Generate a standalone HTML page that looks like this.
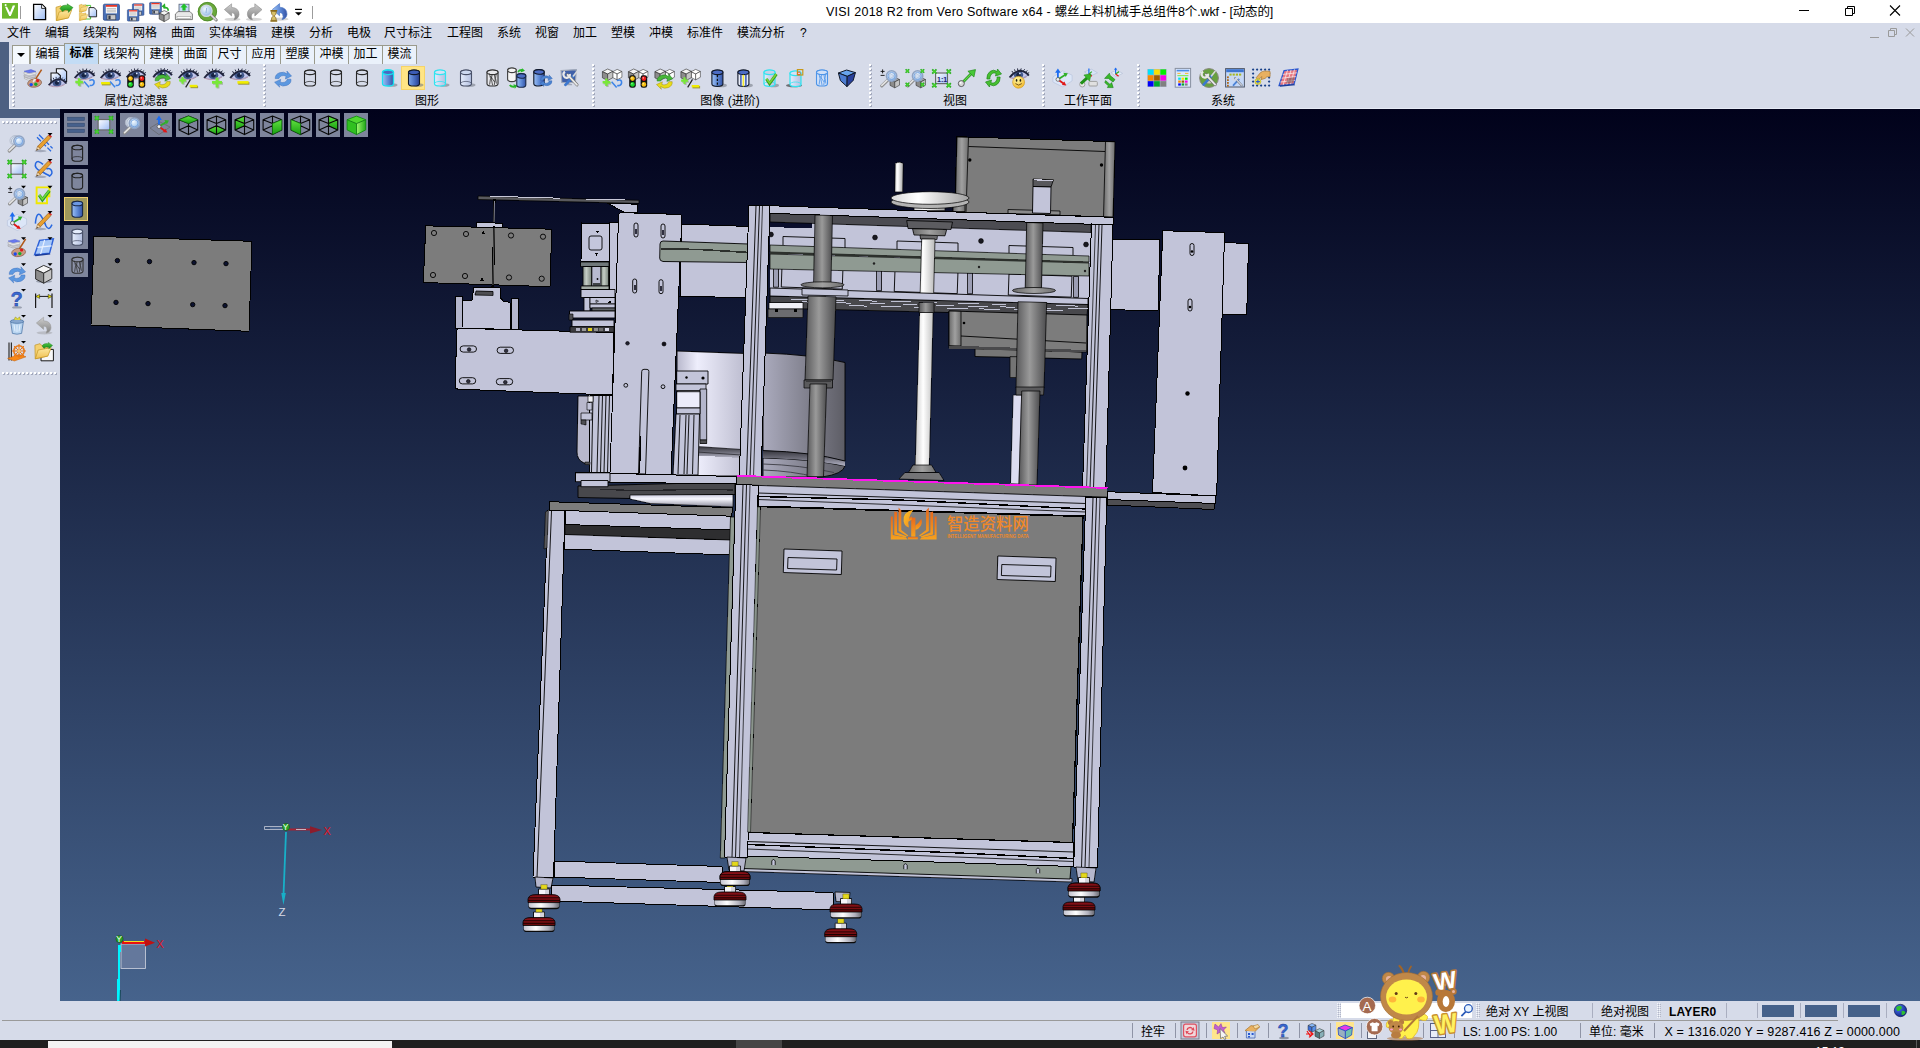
<!DOCTYPE html>
<html lang="zh"><head><meta charset="utf-8"><title>VISI 2018 R2</title>
<style>
html,body{margin:0;padding:0}
body{width:1920px;height:1048px;overflow:hidden;position:relative;background:#d6dbe9;font-family:"Liberation Sans","Noto Sans CJK SC",sans-serif}
.t{position:absolute;line-height:16px;white-space:nowrap}
svg{position:absolute;left:0;top:0;overflow:hidden}
</style></head><body>
<div style="position:absolute;left:0;top:0;width:1920px;height:23px;background:#fff"></div>
<div class="t " style="left:826px;top:3.5px;font-size:12.5px;color:#000;white-space:nowrap;"><span style="letter-spacing:0.24px">VISI 2018 R2 from Vero Software x64 - </span><span style="letter-spacing:-0.16px">螺丝上料机械手总组件8个.wkf - [动态的]</span></div>
<div style="position:absolute;left:0;top:23px;width:1920px;height:21px;background:#d6dbe9"></div>
<div class="t " style="left:7px;top:24.5px;font-size:12px;color:#000;">文件</div>
<div class="t " style="left:45px;top:24.5px;font-size:12px;color:#000;">编辑</div>
<div class="t " style="left:83px;top:24.5px;font-size:12px;color:#000;">线架构</div>
<div class="t " style="left:133px;top:24.5px;font-size:12px;color:#000;">网格</div>
<div class="t " style="left:171px;top:24.5px;font-size:12px;color:#000;">曲面</div>
<div class="t " style="left:209px;top:24.5px;font-size:12px;color:#000;">实体编辑</div>
<div class="t " style="left:271px;top:24.5px;font-size:12px;color:#000;">建模</div>
<div class="t " style="left:309px;top:24.5px;font-size:12px;color:#000;">分析</div>
<div class="t " style="left:347px;top:24.5px;font-size:12px;color:#000;">电极</div>
<div class="t " style="left:384px;top:24.5px;font-size:12px;color:#000;">尺寸标注</div>
<div class="t " style="left:447px;top:24.5px;font-size:12px;color:#000;">工程图</div>
<div class="t " style="left:497px;top:24.5px;font-size:12px;color:#000;">系统</div>
<div class="t " style="left:535px;top:24.5px;font-size:12px;color:#000;">视窗</div>
<div class="t " style="left:573px;top:24.5px;font-size:12px;color:#000;">加工</div>
<div class="t " style="left:611px;top:24.5px;font-size:12px;color:#000;">塑模</div>
<div class="t " style="left:649px;top:24.5px;font-size:12px;color:#000;">冲模</div>
<div class="t " style="left:687px;top:24.5px;font-size:12px;color:#000;">标准件</div>
<div class="t " style="left:737px;top:24.5px;font-size:12px;color:#000;">模流分析</div>
<div class="t " style="left:800px;top:24.5px;font-size:12px;color:#000;">?</div>
<div style="position:absolute;left:0;top:42px;width:9px;height:76px;background:#4d6082"></div>
<div style="position:absolute;left:0;top:109px;width:60px;height:9px;background:#4d6082"></div>
<div style="position:absolute;left:9px;top:42px;width:1911px;height:67px;background:#d6dbe9"></div>
<div style="position:absolute;left:9px;top:64px;width:1911px;height:45px;border-left:1px solid #e6eaf5;border-bottom:1px solid #e6eaf5;box-sizing:border-box"></div>
<div style="position:absolute;left:12px;top:45px;width:18px;height:19px;background:#f4f8fd;border:1px solid #9a9a8c;border-bottom:none;box-sizing:border-box"></div>
<div style="position:absolute;left:17px;top:53px;width:0;height:0;border-left:4px solid transparent;border-right:4px solid transparent;border-top:4px solid #000"></div>
<div style="position:absolute;left:30px;top:45px;width:35px;height:19px;background:#eaf1fb;border:1px solid #9a9a8c;border-bottom:none;box-sizing:border-box"></div>
<div class="t " style="left:30px;top:46px;font-size:12px;color:#000;width:35px;text-align:center;">编辑</div>
<div style="position:absolute;left:64px;top:43px;width:35px;height:21px;background:#c3dcf5;border:1px solid #9a9a8c;border-bottom:none;box-sizing:border-box"></div>
<div class="t " style="left:64px;top:45px;font-size:12px;color:#000;width:35px;text-align:center;font-weight:bold;">标准</div>
<div style="position:absolute;left:98px;top:45px;width:47px;height:19px;background:#eaf1fb;border:1px solid #9a9a8c;border-bottom:none;box-sizing:border-box"></div>
<div class="t " style="left:98px;top:46px;font-size:12px;color:#000;width:47px;text-align:center;">线架构</div>
<div style="position:absolute;left:144px;top:45px;width:35px;height:19px;background:#eaf1fb;border:1px solid #9a9a8c;border-bottom:none;box-sizing:border-box"></div>
<div class="t " style="left:144px;top:46px;font-size:12px;color:#000;width:35px;text-align:center;">建模</div>
<div style="position:absolute;left:178px;top:45px;width:35px;height:19px;background:#eaf1fb;border:1px solid #9a9a8c;border-bottom:none;box-sizing:border-box"></div>
<div class="t " style="left:178px;top:46px;font-size:12px;color:#000;width:35px;text-align:center;">曲面</div>
<div style="position:absolute;left:212px;top:45px;width:35px;height:19px;background:#eaf1fb;border:1px solid #9a9a8c;border-bottom:none;box-sizing:border-box"></div>
<div class="t " style="left:212px;top:46px;font-size:12px;color:#000;width:35px;text-align:center;">尺寸</div>
<div style="position:absolute;left:246px;top:45px;width:35px;height:19px;background:#eaf1fb;border:1px solid #9a9a8c;border-bottom:none;box-sizing:border-box"></div>
<div class="t " style="left:246px;top:46px;font-size:12px;color:#000;width:35px;text-align:center;">应用</div>
<div style="position:absolute;left:280px;top:45px;width:35px;height:19px;background:#eaf1fb;border:1px solid #9a9a8c;border-bottom:none;box-sizing:border-box"></div>
<div class="t " style="left:280px;top:46px;font-size:12px;color:#000;width:35px;text-align:center;">塑膜</div>
<div style="position:absolute;left:314px;top:45px;width:35px;height:19px;background:#eaf1fb;border:1px solid #9a9a8c;border-bottom:none;box-sizing:border-box"></div>
<div class="t " style="left:314px;top:46px;font-size:12px;color:#000;width:35px;text-align:center;">冲模</div>
<div style="position:absolute;left:348px;top:45px;width:35px;height:19px;background:#eaf1fb;border:1px solid #9a9a8c;border-bottom:none;box-sizing:border-box"></div>
<div class="t " style="left:348px;top:46px;font-size:12px;color:#000;width:35px;text-align:center;">加工</div>
<div style="position:absolute;left:382px;top:45px;width:35px;height:19px;background:#eaf1fb;border:1px solid #9a9a8c;border-bottom:none;box-sizing:border-box"></div>
<div class="t " style="left:382px;top:46px;font-size:12px;color:#000;width:35px;text-align:center;">模流</div>
<div style="position:absolute;left:12px;top:64px;width:3px;height:44px;background:repeating-linear-gradient(to bottom,#fff 0 2px,transparent 2px 4px) 0 0/2px 100% no-repeat,repeating-linear-gradient(to bottom,transparent 0 1px,#a3a9bc 1px 3px,transparent 3px 4px) 1px 0/2px 100% no-repeat"></div>
<div style="position:absolute;left:263px;top:64px;width:3px;height:44px;background:repeating-linear-gradient(to bottom,#fff 0 2px,transparent 2px 4px) 0 0/2px 100% no-repeat,repeating-linear-gradient(to bottom,transparent 0 1px,#a3a9bc 1px 3px,transparent 3px 4px) 1px 0/2px 100% no-repeat"></div>
<div style="position:absolute;left:592px;top:64px;width:3px;height:44px;background:repeating-linear-gradient(to bottom,#fff 0 2px,transparent 2px 4px) 0 0/2px 100% no-repeat,repeating-linear-gradient(to bottom,transparent 0 1px,#a3a9bc 1px 3px,transparent 3px 4px) 1px 0/2px 100% no-repeat"></div>
<div style="position:absolute;left:869px;top:64px;width:3px;height:44px;background:repeating-linear-gradient(to bottom,#fff 0 2px,transparent 2px 4px) 0 0/2px 100% no-repeat,repeating-linear-gradient(to bottom,transparent 0 1px,#a3a9bc 1px 3px,transparent 3px 4px) 1px 0/2px 100% no-repeat"></div>
<div style="position:absolute;left:1042px;top:64px;width:3px;height:44px;background:repeating-linear-gradient(to bottom,#fff 0 2px,transparent 2px 4px) 0 0/2px 100% no-repeat,repeating-linear-gradient(to bottom,transparent 0 1px,#a3a9bc 1px 3px,transparent 3px 4px) 1px 0/2px 100% no-repeat"></div>
<div style="position:absolute;left:1137px;top:64px;width:3px;height:44px;background:repeating-linear-gradient(to bottom,#fff 0 2px,transparent 2px 4px) 0 0/2px 100% no-repeat,repeating-linear-gradient(to bottom,transparent 0 1px,#a3a9bc 1px 3px,transparent 3px 4px) 1px 0/2px 100% no-repeat"></div>
<div class="t " style="left:76px;top:93px;font-size:12px;color:#000;width:120px;text-align:center;">属性/过滤器</div>
<div class="t " style="left:367px;top:93px;font-size:12px;color:#000;width:120px;text-align:center;">图形</div>
<div class="t " style="left:670px;top:93px;font-size:12px;color:#000;width:120px;text-align:center;">图像 (进阶)</div>
<div class="t " style="left:895px;top:93px;font-size:12px;color:#000;width:120px;text-align:center;">视图</div>
<div class="t " style="left:1028px;top:93px;font-size:12px;color:#000;width:120px;text-align:center;">工作平面</div>
<div class="t " style="left:1163px;top:93px;font-size:12px;color:#000;width:120px;text-align:center;">系统</div>
<div style="position:absolute;left:401px;top:66px;width:24px;height:24px;background:#ffe585;border:1px solid #f6d468;box-sizing:border-box"></div>
<div style="position:absolute;left:0;top:118px;width:60px;height:883px;background:#d6dbe9"></div>
<div style="position:absolute;left:2px;top:121px;width:56px;height:3px;background:repeating-linear-gradient(to right,#fff 0 2px,transparent 2px 4px) 0 0/100% 2px no-repeat,repeating-linear-gradient(to right,transparent 0 1px,#a3a9bc 1px 3px,transparent 3px 4px) 0 1px/100% 2px no-repeat"></div>
<div style="position:absolute;left:2px;top:372px;width:56px;height:3px;background:repeating-linear-gradient(to right,#fff 0 2px,transparent 2px 4px) 0 0/100% 2px no-repeat,repeating-linear-gradient(to right,transparent 0 1px,#a3a9bc 1px 3px,transparent 3px 4px) 0 1px/100% 2px no-repeat"></div>
<div style="position:absolute;left:0;top:1001px;width:1920px;height:39px;background:#d6dbe9"></div>
<div style="position:absolute;left:2px;top:1020px;width:1836px;height:1px;background:#9a9a9a"></div>
<div style="position:absolute;left:1341px;top:1003px;width:131px;height:15px;background:#fff"></div>
<div style="position:absolute;left:1337px;top:1003px;width:4px;height:15px;background:repeating-linear-gradient(to bottom,#f4f6fa 0 1px,transparent 1px 2px) 0 0/1px 100% no-repeat,repeating-linear-gradient(to bottom,transparent 0 1px,#b4b8c8 1px 2px) 1px 0/1px 100% no-repeat,repeating-linear-gradient(to bottom,#f4f6fa 0 1px,transparent 1px 2px) 2px 0/1px 100% no-repeat,repeating-linear-gradient(to bottom,transparent 0 1px,#b4b8c8 1px 2px) 3px 0/1px 100% no-repeat"></div>
<div style="position:absolute;left:1476px;top:1003px;width:4px;height:15px;background:repeating-linear-gradient(to bottom,#f4f6fa 0 1px,transparent 1px 2px) 0 0/1px 100% no-repeat,repeating-linear-gradient(to bottom,transparent 0 1px,#b4b8c8 1px 2px) 1px 0/1px 100% no-repeat,repeating-linear-gradient(to bottom,#f4f6fa 0 1px,transparent 1px 2px) 2px 0/1px 100% no-repeat,repeating-linear-gradient(to bottom,transparent 0 1px,#b4b8c8 1px 2px) 3px 0/1px 100% no-repeat"></div>
<div style="position:absolute;left:1657px;top:1003px;width:4px;height:15px;background:repeating-linear-gradient(to bottom,#f4f6fa 0 1px,transparent 1px 2px) 0 0/1px 100% no-repeat,repeating-linear-gradient(to bottom,transparent 0 1px,#b4b8c8 1px 2px) 1px 0/1px 100% no-repeat,repeating-linear-gradient(to bottom,#f4f6fa 0 1px,transparent 1px 2px) 2px 0/1px 100% no-repeat,repeating-linear-gradient(to bottom,transparent 0 1px,#b4b8c8 1px 2px) 3px 0/1px 100% no-repeat"></div>
<div class="t " style="left:1486px;top:1004px;font-size:12px;color:#000;white-space:nowrap;">绝对 XY 上视图</div>
<div class="t " style="left:1601px;top:1004px;font-size:12px;color:#000;">绝对视图</div>
<div class="t " style="left:1669px;top:1004px;font-size:12px;color:#000;font-weight:bold;letter-spacing:0.2px;">LAYER0</div>
<div style="position:absolute;left:1592px;top:1003px;width:1px;height:15px;background:#a9aec0"></div>
<div style="position:absolute;left:1726px;top:1003px;width:1px;height:15px;background:#a9aec0"></div>
<div style="position:absolute;left:1757px;top:1003px;width:1px;height:15px;background:#a9aec0"></div>
<div style="position:absolute;left:1800px;top:1003px;width:1px;height:15px;background:#a9aec0"></div>
<div style="position:absolute;left:1843px;top:1003px;width:1px;height:15px;background:#a9aec0"></div>
<div style="position:absolute;left:1886px;top:1003px;width:1px;height:15px;background:#a9aec0"></div>
<div style="position:absolute;left:1762px;top:1005px;width:32px;height:12px;background:#45618a"></div>
<div style="position:absolute;left:1805px;top:1005px;width:32px;height:12px;background:#45618a"></div>
<div style="position:absolute;left:1848px;top:1005px;width:32px;height:12px;background:#45618a"></div>
<div style="position:absolute;left:1132px;top:1023px;width:1px;height:15px;background:#8f94a6"></div>
<div style="position:absolute;left:1175px;top:1023px;width:1px;height:15px;background:#8f94a6"></div>
<div style="position:absolute;left:1206px;top:1023px;width:1px;height:15px;background:#8f94a6"></div>
<div style="position:absolute;left:1237px;top:1023px;width:1px;height:15px;background:#8f94a6"></div>
<div style="position:absolute;left:1268px;top:1023px;width:1px;height:15px;background:#8f94a6"></div>
<div style="position:absolute;left:1299px;top:1023px;width:1px;height:15px;background:#8f94a6"></div>
<div style="position:absolute;left:1330px;top:1023px;width:1px;height:15px;background:#8f94a6"></div>
<div style="position:absolute;left:1361px;top:1023px;width:1px;height:15px;background:#8f94a6"></div>
<div style="position:absolute;left:1423px;top:1023px;width:1px;height:15px;background:#8f94a6"></div>
<div style="position:absolute;left:1454px;top:1023px;width:1px;height:15px;background:#8f94a6"></div>
<div style="position:absolute;left:1580px;top:1023px;width:1px;height:15px;background:#8f94a6"></div>
<div style="position:absolute;left:1654px;top:1023px;width:1px;height:15px;background:#8f94a6"></div>
<div class="t " style="left:1141px;top:1024px;font-size:12px;color:#000;">拴牢</div>
<div class="t " style="left:1463px;top:1024px;font-size:12px;color:#000;white-space:nowrap;">LS: 1.00 PS: 1.00</div>
<div class="t " style="left:1589px;top:1024px;font-size:12px;color:#000;white-space:nowrap;">单位: 毫米</div>
<div class="t " style="left:1664.5px;top:1024px;font-size:12.5px;color:#000;white-space:nowrap;letter-spacing:0.15px;">X = 1316.020 Y = 9287.416 Z = 0000.000</div>
<div style="position:absolute;left:0;top:1040px;width:1920px;height:8px;background:#1f1f1f"></div>
<div style="position:absolute;left:48px;top:1041px;width:344px;height:7px;background:#f2f2f2"></div>
<div style="position:absolute;left:736px;top:1040px;width:46px;height:8px;background:#454545"></div>
<div class="t " style="left:1815px;top:1044px;font-size:12px;color:#fff;">15:13</div>
<div style="position:absolute;left:1916px;top:1040px;width:1px;height:8px;background:#5a5a5a"></div>
<svg width="1920" height="1048" viewBox="0 0 1920 1048" style="z-index:1">
<defs>
<linearGradient id="bg" x1="0" y1="0" x2="0" y2="1"><stop offset="0" stop-color="#01021b"/><stop offset="1" stop-color="#46638c"/></linearGradient>
<linearGradient id="rod" x1="0" y1="0" x2="1" y2="0"><stop offset="0" stop-color="#58585a"/><stop offset="0.45" stop-color="#9a9a9a"/><stop offset="1" stop-color="#4c4c4e"/></linearGradient>
<linearGradient id="shaft" x1="0" y1="0" x2="1" y2="0"><stop offset="0" stop-color="#c8c8c8"/><stop offset="0.4" stop-color="#ffffff"/><stop offset="1" stop-color="#b8b8b8"/></linearGradient>
<linearGradient id="drum" gradientUnits="userSpaceOnUse" x1="677" y1="0" x2="846" y2="0"><stop offset="0" stop-color="#b8b8cc"/><stop offset="0.12" stop-color="#eeeefc"/><stop offset="0.45" stop-color="#b4b4c8"/><stop offset="1" stop-color="#5c5c64"/></linearGradient>
<linearGradient id="gcyl" x1="0" y1="0" x2="1" y2="0"><stop offset="0" stop-color="#8a948c"/><stop offset="0.4" stop-color="#c4ccc4"/><stop offset="1" stop-color="#7a847c"/></linearGradient>
<linearGradient id="wheel" x1="0" y1="0" x2="1" y2="0"><stop offset="0" stop-color="#d8d8d8"/><stop offset="0.35" stop-color="#ffffff"/><stop offset="1" stop-color="#a0a0a0"/></linearGradient>
<linearGradient id="gedge" x1="0" y1="0" x2="1" y2="0"><stop offset="0" stop-color="#6a6a6a"/><stop offset="0.5" stop-color="#a0a0a0"/><stop offset="1" stop-color="#6e6e6e"/></linearGradient>
<linearGradient id="logo" x1="0" y1="0" x2="0" y2="1"><stop offset="0" stop-color="#e8681c"/><stop offset="1" stop-color="#f6a21e"/></linearGradient>
<linearGradient id="dome" x1="0" y1="0" x2="0" y2="1"><stop offset="0" stop-color="#6e0a10"/><stop offset="0.3" stop-color="#8c1219"/><stop offset="1" stop-color="#600608"/></linearGradient>
<linearGradient id="rim" x1="0" y1="0" x2="1" y2="0"><stop offset="0" stop-color="#c4c4d0"/><stop offset="0.4" stop-color="#ffffff"/><stop offset="0.8" stop-color="#b0b0bc"/><stop offset="1" stop-color="#6c6c74"/></linearGradient>
<linearGradient id="logoY" x1="0" y1="0" x2="1" y2="1"><stop offset="0" stop-color="#fcc428"/><stop offset="1" stop-color="#f08a1c"/></linearGradient>
<linearGradient id="band" x1="0" y1="0" x2="0" y2="1"><stop offset="0" stop-color="#34343c"/><stop offset="0.5" stop-color="#6c6c78"/><stop offset="1" stop-color="#b4b4c6"/></linearGradient>
<linearGradient id="flange" x1="0" y1="0" x2="0" y2="1"><stop offset="0" stop-color="#c8c8dc"/><stop offset="0.35" stop-color="#f8f8ff"/><stop offset="1" stop-color="#8c8c9c"/></linearGradient>
</defs>
<rect x="60" y="109" width="1860" height="892" fill="url(#bg)"/>
<g stroke-linejoin="round" shape-rendering="crispEdges">
<polygon points="94,236.3 252,241.3 249,331.3 91,325.3" fill="#7c7c7c" stroke="#000" stroke-width="1" />
<circle cx="117.4" cy="260.6" r="2.2" fill="#0c1230" stroke="#000" stroke-width="0.9" shape-rendering="geometricPrecision"/>
<circle cx="149.5" cy="261.6" r="2.2" fill="#0c1230" stroke="#000" stroke-width="0.9" shape-rendering="geometricPrecision"/>
<circle cx="194" cy="262.6" r="2.2" fill="#0c1230" stroke="#000" stroke-width="0.9" shape-rendering="geometricPrecision"/>
<circle cx="226" cy="263.6" r="2.2" fill="#0c1230" stroke="#000" stroke-width="0.9" shape-rendering="geometricPrecision"/>
<circle cx="116" cy="302.4" r="2.2" fill="#0c1230" stroke="#000" stroke-width="0.9" shape-rendering="geometricPrecision"/>
<circle cx="148" cy="303.6" r="2.2" fill="#0c1230" stroke="#000" stroke-width="0.9" shape-rendering="geometricPrecision"/>
<circle cx="192.7" cy="304.6" r="2.2" fill="#0c1230" stroke="#000" stroke-width="0.9" shape-rendering="geometricPrecision"/>
<circle cx="225" cy="305.6" r="2.2" fill="#0c1230" stroke="#000" stroke-width="0.9" shape-rendering="geometricPrecision"/>
<polygon points="1112,239 1160,240 1158,311 1109,309.5" fill="#c2c4d9" stroke="#000" stroke-width="1" />
<polygon points="1222,242.5 1248.5,243.5 1246.7,315 1220,314" fill="#c2c4d9" stroke="#000" stroke-width="1" />
<polygon points="1107,499 1215,503.5 1214,509.5 1107,505" fill="#4e4e52" stroke="#000" stroke-width="1" />
<polygon points="1107,491.7 1216,496 1215.5,503.5 1107,499.5" fill="#c2c4d9" stroke="#000" stroke-width="1" />
<polygon points="1162.8,230.7 1224.6,232.6 1216.6,496 1152.5,492.5" fill="#c2c4d9" stroke="#000" stroke-width="1" />
<rect x="1190" y="243.5" width="4" height="12" rx="2" fill="#c2c4d9" stroke="#000" stroke-width="0.9"/>
<circle cx="1192" cy="251.5" r="1.3" fill="#000" stroke="none" stroke-width="1" shape-rendering="geometricPrecision"/>
<rect x="1188" y="299" width="4" height="12" rx="2" fill="#c2c4d9" stroke="#000" stroke-width="0.9"/>
<circle cx="1190" cy="307" r="1.3" fill="#000" stroke="none" stroke-width="1" shape-rendering="geometricPrecision"/>
<circle cx="1187.5" cy="393.5" r="2.2" fill="#000" stroke="none" stroke-width="1" shape-rendering="geometricPrecision"/>
<circle cx="1185" cy="468" r="2.4" fill="#000" stroke="none" stroke-width="1" shape-rendering="geometricPrecision"/>
<polygon points="478,196 639,200.3 639,203.5 478,199.5" fill="#5a5a5e" stroke="#000" stroke-width="0.8" />
<line x1="490" y1="196.2" x2="560" y2="198.2" stroke="#c8c8d8" stroke-width="1"/>
<line x1="585" y1="199" x2="625" y2="200" stroke="#c8c8d8" stroke-width="1"/>
<polygon points="608,203.4 637.5,204.2 637.5,212.5 624,212.3" fill="#c2c4d9" stroke="#000" stroke-width="1" />
<line x1="494.5" y1="199" x2="492.5" y2="291" stroke="#000" stroke-width="2.2"/>
<line x1="494.5" y1="201" x2="492.7" y2="289" stroke="#c4c6dc" stroke-width="0.7"/>
<polygon points="476,222.5 502,223.2 502,229 476,228" fill="#c2c4d9" stroke="#000" stroke-width="1" />
<polygon points="455,296 462,296 462,328 455,328" fill="#b4b6cc" stroke="#000" stroke-width="1" />
<polygon points="511.5,298 518,298 518,329.5 511.5,329.5" fill="#b4b6cc" stroke="#000" stroke-width="1" />
<polygon points="462.5,301 472,300 474,287 500,288 500,297 503,301 510,302.5 510,329.5 462,328" fill="#c2c4d9" stroke="#000" stroke-width="1" />
<polygon points="476,291 493,291.5 493,295.5 475,295" fill="#4e4e52" stroke="#000" stroke-width="0.8" />
<polygon points="425.8,225.8 551.7,229.2 550,286.7 423.3,282.5" fill="#7c7c7c" stroke="#000" stroke-width="1" />
<circle cx="434" cy="233" r="2.6" fill="#7c7c7c" stroke="#000" stroke-width="0.9" shape-rendering="geometricPrecision"/>
<circle cx="466" cy="234" r="2.6" fill="#7c7c7c" stroke="#000" stroke-width="0.9" shape-rendering="geometricPrecision"/>
<circle cx="511" cy="235.5" r="2.6" fill="#7c7c7c" stroke="#000" stroke-width="0.9" shape-rendering="geometricPrecision"/>
<circle cx="543" cy="236.7" r="2.6" fill="#7c7c7c" stroke="#000" stroke-width="0.9" shape-rendering="geometricPrecision"/>
<circle cx="433" cy="275" r="2.6" fill="#7c7c7c" stroke="#000" stroke-width="0.9" shape-rendering="geometricPrecision"/>
<circle cx="465" cy="276" r="2.6" fill="#7c7c7c" stroke="#000" stroke-width="0.9" shape-rendering="geometricPrecision"/>
<circle cx="509" cy="277.5" r="2.6" fill="#7c7c7c" stroke="#000" stroke-width="0.9" shape-rendering="geometricPrecision"/>
<circle cx="541.7" cy="278.7" r="2.6" fill="#7c7c7c" stroke="#000" stroke-width="0.9" shape-rendering="geometricPrecision"/>
<polygon points="481.5,234 485,234 483.2,230.5" fill="#000" stroke="none" stroke-width="1" />
<polygon points="480,281 484,281 482,277.5" fill="#000" stroke="none" stroke-width="1" />
<line x1="494.2" y1="226" x2="492.8" y2="287" stroke="#000" stroke-width="2.4"/>
<line x1="494.2" y1="228" x2="492.9" y2="285" stroke="#9a9a9a" stroke-width="0.6"/>
<path d="M459,328.3 L614,332.5 L612.5,395 L458,389.2 Q455,389 455.1,386 L456.8,331 Q457,328.2 459,328.3 Z" fill="#c2c4d9" stroke="#000"/>
<rect x="460.1" y="345.9" width="16.4" height="6.2" rx="3.1" fill="#c2c4d9" stroke="#000" stroke-width="0.9"/>
<circle cx="469.1" cy="349.5" r="1.8" fill="#303040" stroke="#000" stroke-width="0.6" shape-rendering="geometricPrecision"/>
<rect x="497.1" y="347.2" width="16.4" height="6.2" rx="3.1" fill="#c2c4d9" stroke="#000" stroke-width="0.9"/>
<circle cx="506.1" cy="350.8" r="1.8" fill="#303040" stroke="#000" stroke-width="0.6" shape-rendering="geometricPrecision"/>
<rect x="459.3" y="377.7" width="16.4" height="6.2" rx="3.1" fill="#c2c4d9" stroke="#000" stroke-width="0.9"/>
<circle cx="468.3" cy="381.3" r="1.8" fill="#303040" stroke="#000" stroke-width="0.6" shape-rendering="geometricPrecision"/>
<rect x="496.3" y="378.6" width="16.4" height="6.2" rx="3.1" fill="#c2c4d9" stroke="#000" stroke-width="0.9"/>
<circle cx="505.3" cy="382.2" r="1.8" fill="#303040" stroke="#000" stroke-width="0.6" shape-rendering="geometricPrecision"/>
<polygon points="610,222 618.5,222.3 616,293 609.5,293" fill="#c2c4d9" stroke="#000" stroke-width="1" />
<polygon points="581.5,223 609.5,224 609,262 581,261" fill="#c2c4d9" stroke="#000" stroke-width="1" />
<rect x="589" y="236" width="13" height="14" rx="2" fill="#c4c6dc" stroke="#000" stroke-width="0.9"/>
<polygon points="596,231 599,231 597.5,233" fill="#000" stroke="none" stroke-width="1" />
<polygon points="595,253 598,253 596.5,255.5" fill="#000" stroke="none" stroke-width="1" />
<rect x="580.5" y="262" width="28.5" height="4.5" fill="#70787a" stroke="#000" stroke-width="0.8" />
<rect x="592" y="266.5" width="9" height="19.5" fill="#b8bad0" stroke="#000" stroke-width="0.6" />
<rect x="583" y="266.5" width="8.5" height="19.5" fill="url(#gcyl)" stroke="#000" stroke-width="0.8" />
<rect x="601" y="266.5" width="7.5" height="19.5" fill="url(#gcyl)" stroke="#000" stroke-width="0.8" />
<circle cx="597.5" cy="279" r="0.9" fill="#000" stroke="none" stroke-width="1" shape-rendering="geometricPrecision"/>
<rect x="593" y="283" width="7" height="3" fill="#404448" stroke="none" stroke-width="1" />
<rect x="581" y="286" width="28" height="3.5" fill="#a4aca6" stroke="#000" stroke-width="0.8" />
<rect x="581" y="289.5" width="34" height="8" fill="#c2c4d9" stroke="#000" stroke-width="0.9" />
<rect x="584" y="297.5" width="6" height="13.5" fill="#c2c4d9" stroke="#000" stroke-width="0.8" />
<rect x="590" y="297.5" width="25" height="6.5" fill="#c2c4d9" stroke="#000" stroke-width="0.8" />
<polygon points="596,300 596,302.5 598.5,301.2" fill="#c2c4d9" stroke="#000" stroke-width="0.6" />
<polygon points="608.5,302.5 611.5,302.5 610,299.8" fill="#000" stroke="none" stroke-width="1" />
<rect x="590" y="304" width="25" height="4" fill="#c2c4d9" stroke="#000" stroke-width="0.8" />
<rect x="592" y="308" width="23" height="3" fill="#606468" stroke="#000" stroke-width="0.7" />
<rect x="569.5" y="311" width="45.5" height="7" fill="#c2c4d9" stroke="#000" stroke-width="0.9" />
<rect x="569" y="314" width="4" height="6" fill="#4e4e52" stroke="#000" stroke-width="0.6" />
<rect x="572" y="320" width="42" height="6.7" fill="#c2c4d9" stroke="#000" stroke-width="0.9" />
<rect x="570" y="326.7" width="44" height="5.6" fill="#3c3c40" stroke="#000" stroke-width="0.8" />
<rect x="576.3" y="327.8" width="3.4" height="3.4" fill="#b0b0c0" stroke="none" stroke-width="1" />
<rect x="582.3" y="327.8" width="3.4" height="3.4" fill="#9a9a9a" stroke="none" stroke-width="1" />
<rect x="588.3" y="327.8" width="3.4" height="3.4" fill="#e0d020" stroke="none" stroke-width="1" />
<rect x="594.3" y="327.8" width="3.4" height="3.4" fill="#909090" stroke="none" stroke-width="1" />
<rect x="599.3" y="327.8" width="3.4" height="3.4" fill="#707070" stroke="none" stroke-width="1" />
<rect x="605.3" y="327.8" width="3.4" height="3.4" fill="#d8d8e8" stroke="none" stroke-width="1" />
<path d="M578,396 L590,396 L590,464 L584,463 Q577,460 577,452 Z" fill="url(#drum)" stroke="#000" stroke-width="0.9"/>
<polygon points="589,395 613,395.5 611,473 590,472.5" fill="#c2c4d9" stroke="#000" stroke-width="1" />
<line x1="593" y1="396" x2="591.5" y2="472" stroke="#000" stroke-width="0.9"/>
<line x1="599" y1="396" x2="597" y2="472" stroke="#000" stroke-width="0.9"/>
<line x1="602.5" y1="396" x2="600.5" y2="472" stroke="#000" stroke-width="0.9"/>
<line x1="606" y1="396" x2="604" y2="472" stroke="#000" stroke-width="0.9"/>
<line x1="609.5" y1="396" x2="607.5" y2="472" stroke="#000" stroke-width="0.9"/>
<rect x="588" y="396" width="5" height="6" fill="#f4f4f8" stroke="#000" stroke-width="0.6" />
<rect x="587" y="402.5" width="5" height="7.5" fill="#c2c4d9" stroke="#000" stroke-width="0.6" />
<rect x="581" y="413" width="11" height="7" fill="#c2c4d9" stroke="#000" stroke-width="0.7" />
<polygon points="581,420 586,420 586,425 581,424" fill="#4e4e52" stroke="#000" stroke-width="0.6" />
<rect x="585" y="462" width="5" height="2.5" fill="#4e4e52" stroke="#000" stroke-width="0.5" />
<polygon points="682,224 749,226.5 749,297.5 680,296.5" fill="#c2c4d9" stroke="#000" stroke-width="1" />
<path d="M677,351 L745,353.5 L741,476 L677,476 Z" fill="url(#drum)" stroke="#000" stroke-width="0.9"/>
<polygon points="697,446.5 741.5,449.5 741.3,458 697,455.5" fill="url(#band)" stroke="none" stroke-width="1" />
<polyline points="697,446.5 741.5,449.5" fill="none" stroke="#2a2a30" stroke-width="0.9" />
<polyline points="697,452 741.4,455" fill="none" stroke="#2a2a30" stroke-width="0.8" />
<rect x="676.7" y="371" width="31.3" height="13" fill="#c2c4d9" stroke="#000" stroke-width="0.9" />
<circle cx="686.5" cy="377.5" r="1.2" fill="#000" stroke="none" stroke-width="1" shape-rendering="geometricPrecision"/>
<circle cx="703" cy="378" r="1.6" fill="#000" stroke="none" stroke-width="1" shape-rendering="geometricPrecision"/>
<rect x="676" y="384" width="30" height="6.5" fill="#c2c4d9" stroke="#000" stroke-width="0.8" />
<rect x="700" y="389" width="6.7" height="51" fill="#b4b6cc" stroke="#000" stroke-width="0.8" />
<rect x="700" y="440" width="6.7" height="3.5" fill="#4e4e52" stroke="#000" stroke-width="0.6" />
<rect x="676.7" y="391.7" width="23.3" height="16.3" fill="#ececfa" stroke="#000" stroke-width="0.9" />
<rect x="676.5" y="408" width="23.5" height="6" fill="#c2c4d9" stroke="#000" stroke-width="0.8" />
<polygon points="676,414 699.5,414 698,475 673,475" fill="#c2c4d9" stroke="#000" stroke-width="0.9" />
<line x1="680" y1="415" x2="678" y2="474" stroke="#000" stroke-width="0.9"/>
<line x1="686" y1="415" x2="684" y2="474" stroke="#000" stroke-width="0.9"/>
<line x1="689" y1="415" x2="687" y2="474" stroke="#000" stroke-width="0.9"/>
<line x1="694" y1="415" x2="692.5" y2="474" stroke="#000" stroke-width="0.9"/>
<path d="M621.5,212.6 L679,214.4 Q682,214.5 681.9,217.5 L671,475 L610,473 L618.6,215.5 Q618.7,212.5 621.5,212.6 Z" fill="#c2c4d9" stroke="#000"/>
<rect x="634" y="223" width="4" height="14" rx="2" fill="#c2c4d9" stroke="#000" stroke-width="0.9"/>
<rect x="635" y="229" width="2" height="5" fill="#303040" stroke="none" stroke-width="1" />
<rect x="661" y="224" width="4" height="14" rx="2" fill="#c2c4d9" stroke="#000" stroke-width="0.9"/>
<rect x="662" y="230" width="2" height="5" fill="#303040" stroke="none" stroke-width="1" />
<rect x="632.7" y="279" width="4" height="14" rx="2" fill="#c2c4d9" stroke="#000" stroke-width="0.9"/>
<rect x="633.7" y="285" width="2" height="5" fill="#303040" stroke="none" stroke-width="1" />
<rect x="659" y="279.7" width="4" height="14" rx="2" fill="#c2c4d9" stroke="#000" stroke-width="0.9"/>
<rect x="660" y="285.7" width="2" height="5" fill="#303040" stroke="none" stroke-width="1" />
<circle cx="627.5" cy="343.3" r="1.8" fill="#202030" stroke="#000" stroke-width="0.6" shape-rendering="geometricPrecision"/>
<circle cx="664" cy="344" r="2" fill="#101018" stroke="#000" stroke-width="0.6" shape-rendering="geometricPrecision"/>
<circle cx="625.8" cy="385.3" r="1.9" fill="#c2c4d9" stroke="#000" stroke-width="0.9" shape-rendering="geometricPrecision"/>
<circle cx="663" cy="386.7" r="1.9" fill="#c2c4d9" stroke="#000" stroke-width="0.9" shape-rendering="geometricPrecision"/>
<path d="M641.7,371.5 Q641.8,369.3 644,369.3 L647,369.4 Q649,369.5 648.9,371.5 L645.5,474 L638.5,473.8 Z" fill="#c2c4d9" stroke="#000" stroke-width="0.9"/>
<line x1="640.5" y1="436" x2="639.5" y2="473" stroke="#000" stroke-width="1.4"/>
<path d="M663,241 L749,244 L749,262.5 L663,261.5 Q659.5,261 659.7,258 L660,244 Q660.2,241 663,241 Z" fill="#8f9a92" stroke="#000" stroke-width="0.9"/>
<polyline points="661,248.8 700,249.5 749,252.5" fill="none" stroke="#2c302c" stroke-width="1.6" />
<polygon points="578,486 735,482 735,494.5 630,496.5 630,498.5 578,497.5" fill="#48484c" stroke="#000" stroke-width="0.9" />
<polyline points="600,489.5 640,490.5 700,489.5 733,490" fill="none" stroke="#242428" stroke-width="1.2" />
<polygon points="630,495 733,494.5 733,507 650,503.5 630,499" fill="url(#flange)" stroke="#000" stroke-width="0.7" />
<polygon points="575,472.5 736,476.5 736,484 610,482.2 575,481.7" fill="#c2c4d9" stroke="#000" stroke-width="1" />
<rect x="575.5" y="472.8" width="34.5" height="8.9" fill="#c2c4d9" stroke="#000" stroke-width="0.9" />
<rect x="581" y="480.5" width="27" height="6.2" fill="#c2c4d9" stroke="#000" stroke-width="0.9" />
<polygon points="551,885 833,892.5 833,910 551,901" fill="#c2c4d9" stroke="#000" stroke-width="1" />
<polygon points="554,861 722,866.5 722,882.5 554,877" fill="#c2c4d9" stroke="#000" stroke-width="1" />
<polygon points="565,534 731,540 731,555 564,549" fill="#c2c4d9" stroke="#000" stroke-width="1" />
<polygon points="565,524 731,529.5 731,540 565,534.5" fill="#2e2e30" stroke="#000" stroke-width="0.8" />
<polygon points="565,510 731,516 731,530 565,524.5" fill="#c2c4d9" stroke="#000" stroke-width="1" />
<polygon points="549,501.7 733,507.7 731.5,516.2 549.5,510" fill="#7c7c7c" stroke="#000" stroke-width="1" />
<polygon points="548,510 565,510.3 553.5,878 533,877" fill="#c2c4d9" stroke="#000" stroke-width="1" />
<line x1="551.5" y1="511" x2="537" y2="877" stroke="#000" stroke-width="0.9"/>
<polygon points="545.5,512 548.5,510 547,548 544,549" fill="#58585c" stroke="#000" stroke-width="0.6" />
<polygon points="730.5,517 735,517 724.8,858 720.3,858" fill="#8f9a92" stroke="#000" stroke-width="0.7" />
<polygon points="535,877 553,878 551,888 536,887" fill="#b4b6cc" stroke="#000" stroke-width="0.8" />
<rect x="533.5" y="912" width="11" height="6.5" fill="#f6f6fa" stroke="#000" stroke-width="0.8" /><rect x="539.5" y="912.7" width="4.5" height="5.8" fill="#d4d4dc" stroke="none" stroke-width="1" /><rect x="535.8" y="907.5" width="6.4" height="4.5" fill="#e4d81c" stroke="#6a6408" stroke-width="0.5" /><path d="M523.5,925 H554.5 V929.5 Q554.5,932.1 551,932.1 H527 Q523.5,932.1 523.5,929.5 Z" fill="#0a0a0a" shape-rendering="geometricPrecision"/><path d="M523.8,925 H554.2 V929 Q554.2,930.7 552,930.7 H526 Q523.8,930.7 523.8,929 Z" fill="url(#rim)" shape-rendering="geometricPrecision"/><path d="M523,925.5 V922 Q523.5,917.5 531,917.5 H547 Q554.5,917.5 555,922 V925.5 Z" fill="url(#dome)" stroke="#000" stroke-width="0.8" shape-rendering="geometricPrecision"/><path d="M524,920.7 H554 M523,923.3 H555" stroke="#140000" stroke-width="0.9" fill="none"/>
<rect x="538.5" y="889.1" width="11" height="6.5" fill="#f6f6fa" stroke="#000" stroke-width="0.8" /><rect x="544.5" y="889.8" width="4.5" height="5.8" fill="#d4d4dc" stroke="none" stroke-width="1" /><rect x="540.8" y="884.6" width="6.4" height="4.5" fill="#e4d81c" stroke="#6a6408" stroke-width="0.5" /><path d="M528.5,902.1 H559.5 V906.6 Q559.5,909.2 556,909.2 H532 Q528.5,909.2 528.5,906.6 Z" fill="#0a0a0a" shape-rendering="geometricPrecision"/><path d="M528.8,902.1 H559.2 V906.1 Q559.2,907.8 557,907.8 H531 Q528.8,907.8 528.8,906.1 Z" fill="url(#rim)" shape-rendering="geometricPrecision"/><path d="M528,902.6 V899.1 Q528.5,894.6 536,894.6 H552 Q559.5,894.6 560,899.1 V902.6 Z" fill="url(#dome)" stroke="#000" stroke-width="0.8" shape-rendering="geometricPrecision"/><path d="M529,897.8 H559 M528,900.4 H560" stroke="#140000" stroke-width="0.9" fill="none"/>
<rect x="835.2" y="923.2" width="11" height="6.5" fill="#f6f6fa" stroke="#000" stroke-width="0.8" /><rect x="841.2" y="923.9" width="4.5" height="5.8" fill="#d4d4dc" stroke="none" stroke-width="1" /><rect x="837.5" y="918.7" width="6.4" height="4.5" fill="#e4d81c" stroke="#6a6408" stroke-width="0.5" /><path d="M825.2,936.2 H856.2 V940.7 Q856.2,943.3 852.7,943.3 H828.7 Q825.2,943.3 825.2,940.7 Z" fill="#0a0a0a" shape-rendering="geometricPrecision"/><path d="M825.5,936.2 H855.9 V940.2 Q855.9,941.9 853.7,941.9 H827.7 Q825.5,941.9 825.5,940.2 Z" fill="url(#rim)" shape-rendering="geometricPrecision"/><path d="M824.7,936.7 V933.2 Q825.2,928.7 832.7,928.7 H848.7 Q856.2,928.7 856.7,933.2 V936.7 Z" fill="url(#dome)" stroke="#000" stroke-width="0.8" shape-rendering="geometricPrecision"/><path d="M825.7,931.9 H855.7 M824.7,934.5 H856.7" stroke="#140000" stroke-width="0.9" fill="none"/>
<polygon points="835,892 850,892.5 849,902 836,901.5" fill="#b4b6cc" stroke="#000" stroke-width="0.8" />
<rect x="840.5" y="898.5" width="11" height="6.5" fill="#f6f6fa" stroke="#000" stroke-width="0.8" /><rect x="846.5" y="899.2" width="4.5" height="5.8" fill="#d4d4dc" stroke="none" stroke-width="1" /><rect x="842.8" y="894" width="6.4" height="4.5" fill="#e4d81c" stroke="#6a6408" stroke-width="0.5" /><path d="M830.5,911.5 H861.5 V916 Q861.5,918.6 858,918.6 H834 Q830.5,918.6 830.5,916 Z" fill="#0a0a0a" shape-rendering="geometricPrecision"/><path d="M830.8,911.5 H861.2 V915.5 Q861.2,917.2 859,917.2 H833 Q830.8,917.2 830.8,915.5 Z" fill="url(#rim)" shape-rendering="geometricPrecision"/><path d="M830,912 V908.5 Q830.5,904 838,904 H854 Q861.5,904 862,908.5 V912 Z" fill="url(#dome)" stroke="#000" stroke-width="0.8" shape-rendering="geometricPrecision"/><path d="M831,907.2 H861 M830,909.8 H862" stroke="#140000" stroke-width="0.9" fill="none"/>
<rect x="724.5" y="886.5" width="11" height="6.5" fill="#f6f6fa" stroke="#000" stroke-width="0.8" /><rect x="730.5" y="887.2" width="4.5" height="5.8" fill="#d4d4dc" stroke="none" stroke-width="1" /><rect x="726.8" y="882" width="6.4" height="4.5" fill="#e4d81c" stroke="#6a6408" stroke-width="0.5" /><path d="M714.5,899.5 H745.5 V904 Q745.5,906.6 742,906.6 H718 Q714.5,906.6 714.5,904 Z" fill="#0a0a0a" shape-rendering="geometricPrecision"/><path d="M714.8,899.5 H745.2 V903.5 Q745.2,905.2 743,905.2 H717 Q714.8,905.2 714.8,903.5 Z" fill="url(#rim)" shape-rendering="geometricPrecision"/><path d="M714,900 V896.5 Q714.5,892 722,892 H738 Q745.5,892 746,896.5 V900 Z" fill="url(#dome)" stroke="#000" stroke-width="0.8" shape-rendering="geometricPrecision"/><path d="M715,895.2 H745 M714,897.8 H746" stroke="#140000" stroke-width="0.9" fill="none"/>
<polygon points="770,221 1091,231 1091,302 770,291" fill="#c2c4d9" stroke="none" stroke-width="1" />
<path d="M763,458 Q812,459 845,466 Q843,474 822,477 L763,477 Z" fill="url(#drum)" stroke="#000" stroke-width="0.9" shape-rendering="geometricPrecision"/>
<path d="M763,464 Q800,465 834,472.500" fill="none" stroke="#3c3c44" stroke-width="0.9" shape-rendering="geometricPrecision"/>
<path d="M763,470 Q792,471 816,477" fill="none" stroke="#3c3c44" stroke-width="0.9" shape-rendering="geometricPrecision"/>
<path d="M763,450.500 Q812,452 845,461 L845,466 Q812,459 763,458 Z" fill="url(#band)" shape-rendering="geometricPrecision"/>
<path d="M763,353 Q812,354.500 845,362.500 L845,461 Q812,452 763,450.500 Z" fill="url(#drum)" stroke="#000" stroke-width="0.9" shape-rendering="geometricPrecision"/>
<polygon points="770,222 812,223.4 812,228.5 770,227" fill="#0a0e2c" stroke="none" stroke-width="1" />
<polyline points="783,246 783,236.5 845,238.5 845,248" fill="none" stroke="#000" stroke-width="0.9" />
<polyline points="897,250 897,241 958,243 958,252" fill="none" stroke="#000" stroke-width="0.9" />
<polyline points="1009,254 1009,245.5 1073,247.5 1073,256" fill="none" stroke="#000" stroke-width="0.9" />
<rect x="782" y="266" width="61" height="21" fill="#c2c4d9" stroke="#000" stroke-width="0.9" transform="rotate(2 782 266)"/>
<rect x="895" y="270" width="63" height="21.5" fill="#c2c4d9" stroke="#000" stroke-width="0.9" transform="rotate(2 895 270)"/>
<rect x="1009" y="274" width="63" height="21" fill="#c2c4d9" stroke="#000" stroke-width="0.9" transform="rotate(2 1009 274)"/>
<rect x="773.5" y="266.204" width="5" height="21" fill="#9c9eb4" stroke="#000" stroke-width="0.8" />
<rect x="876.5" y="269.706" width="5" height="21" fill="#9c9eb4" stroke="#000" stroke-width="0.8" />
<rect x="967.5" y="272.8" width="5" height="21" fill="#9c9eb4" stroke="#000" stroke-width="0.8" />
<rect x="1073.5" y="276.404" width="5" height="21" fill="#9c9eb4" stroke="#000" stroke-width="0.8" />
<circle cx="771" cy="234.5" r="2.4" fill="#181820" stroke="#000" stroke-width="0.6" shape-rendering="geometricPrecision"/>
<circle cx="875" cy="237.5" r="2.4" fill="#181820" stroke="#000" stroke-width="0.6" shape-rendering="geometricPrecision"/>
<circle cx="981" cy="241" r="2.4" fill="#181820" stroke="#000" stroke-width="0.6" shape-rendering="geometricPrecision"/>
<circle cx="1086" cy="244.5" r="2.4" fill="#181820" stroke="#000" stroke-width="0.6" shape-rendering="geometricPrecision"/>
<polygon points="770,245 1089,256 1089,262 770,252" fill="#8f9a92" stroke="#000" stroke-width="0.7" />
<polygon points="770,254 1089,263 1089,276 770,269" fill="#8f9a92" stroke="#000" stroke-width="0.7" />
<polyline points="770,252.7 1089,262.5" fill="none" stroke="#2c302c" stroke-width="1.6" />
<circle cx="874" cy="263.5" r="1.2" fill="#202020" stroke="none" stroke-width="1" shape-rendering="geometricPrecision"/>
<circle cx="979" cy="267" r="1.2" fill="#202020" stroke="none" stroke-width="1" shape-rendering="geometricPrecision"/>
<circle cx="1085" cy="271" r="1.2" fill="#202020" stroke="none" stroke-width="1" shape-rendering="geometricPrecision"/>
<rect x="953" y="203" width="12" height="8.5" fill="url(#gedge)" stroke="#000" stroke-width="0.8" />
<polygon points="956.7,136.7 1115,141.7 1113,217 955,212" fill="#7c7c7c" stroke="#000" stroke-width="1" />
<polygon points="957,137 968.5,137.4 966,212.2 955.2,211.8" fill="url(#gedge)" stroke="#000" stroke-width="0.8" />
<polygon points="1105.5,141.5 1115,141.8 1113,217 1103.5,216.6" fill="url(#gedge)" stroke="#000" stroke-width="0.8" />
<polyline points="968.5,146.5 1105,151.5" fill="none" stroke="#000" stroke-width="0.9" />
<circle cx="969.8" cy="160" r="1.7" fill="#000" stroke="none" stroke-width="1" shape-rendering="geometricPrecision"/>
<circle cx="1101.5" cy="165" r="1.7" fill="#000" stroke="none" stroke-width="1" shape-rendering="geometricPrecision"/>
<polygon points="1008,209.5 1060,211 1060,215 1008,213.5" fill="#8a8a8a" stroke="#000" stroke-width="0.8" />
<polygon points="1033,179 1053.5,179.8 1051,187 1033,186.5" fill="#58585c" stroke="#000" stroke-width="0.8" />
<polygon points="1034,179.2 1053,179.9 1053,181 1034,180.4" fill="#c8c8d8" stroke="none" stroke-width="1" />
<polygon points="1033,186.5 1051,187 1050.5,213.5 1032.5,213" fill="#c2c4d9" stroke="#000" stroke-width="0.9" />
<rect x="953" y="203" width="12" height="8.5" fill="url(#gedge)" stroke="#000" stroke-width="0.8" />
<path d="M895.3,164 Q895.4,162.3 899.3,162.3 Q903.3,162.3 903.3,164 L902.6,192 L894.8,192 Z" fill="url(#wheel)" stroke="#000" stroke-width="0.7"/>
<rect x="914" y="201" width="31" height="9.5" fill="url(#wheel)" stroke="#000" stroke-width="0.7" />
<ellipse cx="930" cy="202" rx="39" ry="6.5" fill="#b4b4b4" stroke="#000" stroke-width="0.7" shape-rendering="geometricPrecision" />
<ellipse cx="930" cy="198" rx="39" ry="6.3" fill="url(#wheel)" stroke="#000" stroke-width="0.7" shape-rendering="geometricPrecision" />
<polygon points="770,213 1091,224 1091,232.5 770,222" fill="#4c4c52" stroke="#000" stroke-width="0.8" />
<polygon points="749,205 1113,217.3 1113,225 749,212.6" fill="#c2c4d9" stroke="#000" stroke-width="1" />
<polygon points="906.7,220.5 952.5,222 951,229.5 908,228.5" fill="#5c5c60" stroke="#000" stroke-width="0.8" />
<polygon points="912.5,228.7 946.7,229.6 945,235.8 914,235" fill="url(#gedge)" stroke="#000" stroke-width="0.8" />
<polygon points="920,235 937.5,235.5 937,239.5 920.5,239" fill="#6a6a6c" stroke="#000" stroke-width="0.7" />
<polygon points="921.7,239 935,239 929.3,466 915.2,466" fill="url(#shaft)" stroke="#000" stroke-width="0.7" />
<polygon points="815,215 832.5,215.6 831,283 813.5,283" fill="url(#rod)" stroke="#000" stroke-width="0.7" />
<polygon points="1026.7,222.5 1043,223 1041.5,288 1025.2,288" fill="url(#rod)" stroke="#000" stroke-width="0.7" />
<polygon points="770,296 1088,303.5 1087,316 770,308" fill="#48484c" stroke="#000" stroke-width="0.8" />
<line x1="790.952" y1="299.024" x2="809.306" y2="299.424" stroke="#c0c2d4" stroke-width="1"/>
<line x1="802.48" y1="301.912" x2="821.311" y2="302.312" stroke="#c0c2d4" stroke-width="1"/>
<line x1="814.503" y1="304.813" x2="829.027" y2="305.213" stroke="#c0c2d4" stroke-width="1"/>
<line x1="823.053" y1="299.826" x2="843.752" y2="300.226" stroke="#c0c2d4" stroke-width="1"/>
<line x1="835.037" y1="302.726" x2="850.912" y2="303.126" stroke="#c0c2d4" stroke-width="1"/>
<line x1="848.983" y1="305.675" x2="866.745" y2="306.075" stroke="#c0c2d4" stroke-width="1"/>
<line x1="859.346" y1="300.734" x2="877.157" y2="301.134" stroke="#c0c2d4" stroke-width="1"/>
<line x1="869.556" y1="303.589" x2="884.761" y2="303.989" stroke="#c0c2d4" stroke-width="1"/>
<line x1="880.539" y1="306.463" x2="901.484" y2="306.863" stroke="#c0c2d4" stroke-width="1"/>
<line x1="891.093" y1="301.527" x2="911.023" y2="301.927" stroke="#c0c2d4" stroke-width="1"/>
<line x1="902.686" y1="304.417" x2="917.198" y2="304.817" stroke="#c0c2d4" stroke-width="1"/>
<line x1="914.033" y1="307.301" x2="932.762" y2="307.701" stroke="#c0c2d4" stroke-width="1"/>
<line x1="923.205" y1="302.33" x2="937.453" y2="302.73" stroke="#c0c2d4" stroke-width="1"/>
<line x1="936.462" y1="305.262" x2="954.244" y2="305.662" stroke="#c0c2d4" stroke-width="1"/>
<line x1="946.875" y1="308.122" x2="967.906" y2="308.522" stroke="#c0c2d4" stroke-width="1"/>
<line x1="957.857" y1="303.196" x2="979.225" y2="303.596" stroke="#c0c2d4" stroke-width="1"/>
<line x1="967.58" y1="306.039" x2="987.987" y2="306.439" stroke="#c0c2d4" stroke-width="1"/>
<line x1="978.778" y1="308.919" x2="1000.26" y2="309.319" stroke="#c0c2d4" stroke-width="1"/>
<line x1="991.515" y1="304.038" x2="1006.3" y2="304.438" stroke="#c0c2d4" stroke-width="1"/>
<line x1="999.544" y1="306.839" x2="1015.28" y2="307.239" stroke="#c0c2d4" stroke-width="1"/>
<line x1="1013.86" y1="309.797" x2="1031.35" y2="310.197" stroke="#c0c2d4" stroke-width="1"/>
<line x1="1023.51" y1="304.838" x2="1039.91" y2="305.238" stroke="#c0c2d4" stroke-width="1"/>
<line x1="1034.03" y1="307.701" x2="1051.12" y2="308.101" stroke="#c0c2d4" stroke-width="1"/>
<line x1="1044.4" y1="310.56" x2="1063.08" y2="310.96" stroke="#c0c2d4" stroke-width="1"/>
<line x1="1056.34" y1="305.658" x2="1077.57" y2="306.058" stroke="#c0c2d4" stroke-width="1"/>
<line x1="1067.73" y1="308.543" x2="1089.16" y2="308.943" stroke="#c0c2d4" stroke-width="1"/>
<ellipse cx="822.5" cy="284.8" rx="21.5" ry="3" fill="url(#gedge)" stroke="#000" stroke-width="0.7" shape-rendering="geometricPrecision" />
<ellipse cx="1034" cy="290.5" rx="21.5" ry="3" fill="url(#gedge)" stroke="#000" stroke-width="0.7" shape-rendering="geometricPrecision" />
<polygon points="770,288 1088,298.5 1088,304.5 770,296" fill="#c2c4d9" stroke="#000" stroke-width="0.9" />
<polygon points="802,288.5 848,290 848,296 802,295" fill="#c2c4d9" stroke="#000" stroke-width="0.8" />
<rect x="769" y="302.5" width="34" height="6.5" fill="#f0f0f6" stroke="#000" stroke-width="0.7" />
<rect x="768" y="309" width="35" height="8.5" fill="#6c6c70" stroke="#000" stroke-width="0.7" />
<rect x="775" y="309" width="3" height="3" fill="#000" stroke="none" stroke-width="1" />
<rect x="794" y="309" width="3" height="3" fill="#000" stroke="none" stroke-width="1" />
<rect x="919" y="302.5" width="15" height="10" fill="url(#rod)" stroke="#000" stroke-width="0.7" />
<polygon points="975,348 1082,352 1081.7,359 975,356.5" fill="#767676" stroke="#000" stroke-width="0.9" />
<polygon points="949,311 1087,315 1086.7,352 949,348" fill="#7c7c7c" stroke="#000" stroke-width="0.9" />
<polygon points="949,311 961,311.4 961,346 949,345.6" fill="url(#gedge)" stroke="#000" stroke-width="0.8" />
<polyline points="961,336 1086,343" fill="none" stroke="#000" stroke-width="0.9" />
<circle cx="964" cy="323" r="1.3" fill="#000" stroke="none" stroke-width="1" shape-rendering="geometricPrecision"/>
<polygon points="949,345.5 1086,350 1086,352.5 949,348.5" fill="#4a4a4c" stroke="none" stroke-width="1" />
<rect x="1010" y="356.7" width="8" height="20.8" fill="#747474" stroke="#000" stroke-width="0.7" />
<polygon points="808,296 836,296.8 833,380 805,380" fill="url(#rod)" stroke="#000" stroke-width="0.7" />
<polygon points="804,380 832.5,380 832.5,388 804,388" fill="#5a5a5c" stroke="#000" stroke-width="0.7" />
<polygon points="806,380 831,380 831,382 806,382" fill="#3a3a3c" stroke="none" stroke-width="1" />
<polygon points="810,384 826.7,384 823.5,476.5 807,476.5" fill="url(#rod)" stroke="#000" stroke-width="0.7" />
<polygon points="1013.2,395 1021.7,395 1019,484 1010.5,483.5" fill="#dcdcf0" stroke="#000" stroke-width="0.6" />
<polygon points="1018,301.7 1046.7,302.5 1044,388 1016,388" fill="url(#rod)" stroke="#000" stroke-width="0.7" />
<polygon points="1016,387 1044,387 1043.5,395 1016,395" fill="#5a5a5c" stroke="#000" stroke-width="0.7" />
<polygon points="1021.7,391 1040,391 1037,485 1019,484.5" fill="url(#rod)" stroke="#000" stroke-width="0.7" />
<polygon points="913,465 931.5,465 936,472.5 908.5,472.5" fill="url(#gedge)" stroke="#000" stroke-width="0.7" />
<polygon points="905,472.5 939,472.5 944,480.5 899,479" fill="#747476" stroke="#000" stroke-width="0.7" />
<polygon points="749,205 770,205.7 761,477 739.3,476.3" fill="#c2c4d9" stroke="#000" stroke-width="1" />
<line x1="756" y1="206" x2="746.5" y2="476" stroke="#000" stroke-width="0.9"/>
<line x1="759.5" y1="206" x2="750" y2="476" stroke="#000" stroke-width="0.9"/>
<line x1="762.5" y1="206" x2="753.5" y2="476" stroke="#000" stroke-width="0.7"/>
<polygon points="1091.5,224 1113,224.8 1105.8,489 1082.5,488" fill="#c2c4d9" stroke="#000" stroke-width="1" />
<line x1="1099" y1="225" x2="1090" y2="488" stroke="#000" stroke-width="0.9"/>
<line x1="1102" y1="225" x2="1093.5" y2="488" stroke="#000" stroke-width="0.9"/>
<line x1="1095.5" y1="225" x2="1086.5" y2="488" stroke="#000" stroke-width="0.7"/>
<rect x="1073.5" y="896.5" width="11" height="6.5" fill="#f6f6fa" stroke="#000" stroke-width="0.8" /><rect x="1079.5" y="897.2" width="4.5" height="5.8" fill="#d4d4dc" stroke="none" stroke-width="1" /><rect x="1075.8" y="892" width="6.4" height="4.5" fill="#e4d81c" stroke="#6a6408" stroke-width="0.5" /><path d="M1063.5,909.5 H1094.5 V914 Q1094.5,916.6 1091,916.6 H1067 Q1063.5,916.6 1063.5,914 Z" fill="#0a0a0a" shape-rendering="geometricPrecision"/><path d="M1063.8,909.5 H1094.2 V913.5 Q1094.2,915.2 1092,915.2 H1066 Q1063.8,915.2 1063.8,913.5 Z" fill="url(#rim)" shape-rendering="geometricPrecision"/><path d="M1063,910 V906.5 Q1063.5,902 1071,902 H1087 Q1094.5,902 1095,906.5 V910 Z" fill="url(#dome)" stroke="#000" stroke-width="0.8" shape-rendering="geometricPrecision"/><path d="M1064,905.2 H1094 M1063,907.8 H1095" stroke="#140000" stroke-width="0.9" fill="none"/>
<rect x="1078.5" y="877.5" width="11" height="6.5" fill="#f6f6fa" stroke="#000" stroke-width="0.8" /><rect x="1084.5" y="878.2" width="4.5" height="5.8" fill="#d4d4dc" stroke="none" stroke-width="1" /><rect x="1080.8" y="873" width="6.4" height="4.5" fill="#e4d81c" stroke="#6a6408" stroke-width="0.5" /><path d="M1068.5,890.5 H1099.5 V895 Q1099.5,897.6 1096,897.6 H1072 Q1068.5,897.6 1068.5,895 Z" fill="#0a0a0a" shape-rendering="geometricPrecision"/><path d="M1068.8,890.5 H1099.2 V894.5 Q1099.2,896.2 1097,896.2 H1071 Q1068.8,896.2 1068.8,894.5 Z" fill="url(#rim)" shape-rendering="geometricPrecision"/><path d="M1068,891 V887.5 Q1068.5,883 1076,883 H1092 Q1099.5,883 1100,887.5 V891 Z" fill="url(#dome)" stroke="#000" stroke-width="0.8" shape-rendering="geometricPrecision"/><path d="M1069,886.2 H1099 M1068,888.8 H1100" stroke="#140000" stroke-width="0.9" fill="none"/>
<rect x="729.5" y="866" width="11" height="6.5" fill="#f6f6fa" stroke="#000" stroke-width="0.8" /><rect x="735.5" y="866.7" width="4.5" height="5.8" fill="#d4d4dc" stroke="none" stroke-width="1" /><rect x="731.8" y="861.5" width="6.4" height="4.5" fill="#e4d81c" stroke="#6a6408" stroke-width="0.5" /><path d="M720.5,879 H749.5 V883.5 Q749.5,886.1 746,886.1 H724 Q720.5,886.1 720.5,883.5 Z" fill="#0a0a0a" shape-rendering="geometricPrecision"/><path d="M720.8,879 H749.2 V883 Q749.2,884.7 747,884.7 H723 Q720.8,884.7 720.8,883 Z" fill="url(#rim)" shape-rendering="geometricPrecision"/><path d="M720,879.5 V876 Q720.5,871.5 728,871.5 H742 Q749.5,871.5 750,876 V879.5 Z" fill="url(#dome)" stroke="#000" stroke-width="0.8" shape-rendering="geometricPrecision"/><path d="M721,874.7 H749 M720,877.3 H750" stroke="#140000" stroke-width="0.9" fill="none"/>
<polygon points="742,868 1072,878.5 1072,882 742,871.5" fill="#c2c4d9" stroke="#000" stroke-width="0.8" />
<polygon points="743,855.5 1071,866 1070,879 742.5,868.5" fill="#8f9a92" stroke="#000" stroke-width="0.9" />
<path d="M771.8,864.976 L771.8,860.976 Q773.5,857.976 775.2,861.076 L775.2,865.076" fill="#c2c4d9" stroke="#000" stroke-width="0.8"/>
<path d="M903.8,869.2 L903.8,865.2 Q905.5,862.2 907.2,865.3 L907.2,869.3" fill="#c2c4d9" stroke="#000" stroke-width="0.8"/>
<path d="M1036.3,873.44 L1036.3,869.44 Q1038,866.44 1039.7,869.54 L1039.7,873.54" fill="#c2c4d9" stroke="#000" stroke-width="0.8"/>
<polygon points="747,832.5 1074,842.5 1073.5,866.5 746.5,856" fill="#c2c4d9" stroke="#000" stroke-width="1" />
<polyline points="747,841.5 1074,852" fill="none" stroke="#000" stroke-width="0.9" />
<polyline points="747,844.5 960,853 1073.5,858.5" fill="none" stroke="#000" stroke-width="1.4" />
<polyline points="747,849 1073.5,861.5" fill="none" stroke="#000" stroke-width="0.8" />
<polygon points="758,484 1086,494 1085.5,516 758,506" fill="#c2c4d9" stroke="#000" stroke-width="1" />
<polyline points="758,493 1086,503.5" fill="none" stroke="#000" stroke-width="0.9" />
<polyline points="758,496.5 900,500 1086,509" fill="none" stroke="#000" stroke-width="1.4" />
<polyline points="758,499.5 1086,512" fill="none" stroke="#000" stroke-width="0.8" />
<polygon points="737.5,476 1107.5,488 1107,497 737,484.5" fill="#7c7c7c" stroke="none" stroke-width="1" />
<polyline points="737,484.7 1107,497.2" fill="none" stroke="#000" stroke-width="0.9" />
<polyline points="737.5,475.8 1107.5,488" fill="none" stroke="#ff14ee" stroke-width="1.8" />
<polygon points="760,506.7 1083,516.5 1072.5,842.5 750,832.5" fill="#7c7c7c" stroke="#000" stroke-width="1.2" />
<polygon points="784,549 842,551 841.3,574.5 783.3,572.5" fill="#c2c4d9" stroke="#000" stroke-width="0.9" />
<polygon points="788,557.5 837,559 836.6,570 787.6,568.5" fill="#c2c4d9" stroke="#000" stroke-width="0.9" />
<polygon points="997.8,556 1056,558 1055.3,581.5 997.1,579.5" fill="#c2c4d9" stroke="#000" stroke-width="0.9" />
<polygon points="1001.8,564.5 1051,566 1050.6,577 1001.4,575.5" fill="#c2c4d9" stroke="#000" stroke-width="0.9" />
<g transform="translate(890.8,507.6)" shape-rendering="geometricPrecision">
<g fill="url(#logo)">
<path d="M0,9 L2,9 L2,27.5 L15,30 L17,32 L0,32 Z"/><path d="M3.5,4 L6.2,4.6 L6.2,25 L16,29 L15,29.8 L3.5,26.8 Z"/><path d="M7.8,0 L10.5,3 L10.5,22.5 L17.5,28 L16.5,28.6 L7.8,23.5 Z"/>
<g transform="translate(45.8,0) scale(-1,1)"><path d="M0,9 L2,9 L2,27.5 L15,30 L17,32 L0,32 Z"/><path d="M3.5,4 L6.2,4.6 L6.2,25 L16,29 L15,29.8 L3.5,26.8 Z"/><path d="M7.8,0 L10.5,3 L10.5,22.5 L17.5,28 L16.5,28.6 L7.8,23.5 Z"/></g>
<path d="M20.4,10 L24.6,10 L24.6,29 L20.4,29 Z"/><path d="M16.2,12.6 L21,8.4 L21,11.8 L18,13.8 Z"/>
<path d="M30.6,11.2 Q32.2,17 28,20.6 Q26.6,21.6 24.6,22.2 L24.6,18 Q28,15.5 30.6,11.2 Z"/>
<rect x="17.2" y="29.3" width="9.8" height="2.4"/>
</g>
<path d="M22.6,2.2 Q11.6,4.6 12.8,13.6 Q13.8,18.8 18.2,19.8 Q16.8,15 18.4,10.4 Q19.6,5.8 22.6,2.2 Z" fill="url(#logoY)"/>
</g>
<g shape-rendering="geometricPrecision">
<text x="947" y="529.6" font-family="'Liberation Sans','Noto Sans CJK SC',sans-serif" font-size="16.6" font-weight="500" fill="#f08828" textLength="81.8" lengthAdjust="spacingAndGlyphs">智造资料网</text>
<text x="947.2" y="538" font-family="'Liberation Sans',sans-serif" font-size="4.6" font-weight="bold" fill="#ee8a28" textLength="81.5" lengthAdjust="spacingAndGlyphs">INTELLIGENT MANUFACTURING DATA</text>
</g>
<polygon points="735.8,484.5 758.3,485.2 747.5,858 724.5,857" fill="#c2c4d9" stroke="#000" stroke-width="1" />
<line x1="743" y1="485" x2="732" y2="857" stroke="#000" stroke-width="0.9"/>
<line x1="746.5" y1="485" x2="735.5" y2="857" stroke="#000" stroke-width="0.9"/>
<line x1="750" y1="485" x2="739.5" y2="857" stroke="#000" stroke-width="0.7"/>
<polygon points="757.5,507 760.5,507 750.5,832 747.5,832" fill="#8a948c" stroke="#000" stroke-width="0.5" />
<polygon points="1085.8,497 1106.7,497.6 1097.5,868 1073.7,867" fill="#c2c4d9" stroke="#000" stroke-width="1" />
<line x1="1093" y1="498" x2="1081.5" y2="867" stroke="#000" stroke-width="0.9"/>
<line x1="1096.5" y1="498" x2="1085" y2="867" stroke="#000" stroke-width="0.9"/>
<line x1="1100" y1="498" x2="1089" y2="867" stroke="#000" stroke-width="0.7"/>
<polygon points="727,857 746,858 744,871 729,870" fill="#b4b6cc" stroke="#000" stroke-width="0.8" />
<polygon points="1076,867 1096,868 1094,882 1078,881" fill="#b4b6cc" stroke="#000" stroke-width="0.8" />
<rect x="729.5" y="866" width="11" height="6.5" fill="#f6f6fa" stroke="#000" stroke-width="0.8" /><rect x="735.5" y="866.7" width="4.5" height="5.8" fill="#d4d4dc" stroke="none" stroke-width="1" /><rect x="731.8" y="861.5" width="6.4" height="4.5" fill="#e4d81c" stroke="#6a6408" stroke-width="0.5" /><path d="M720.5,879 H749.5 V883.5 Q749.5,886.1 746,886.1 H724 Q720.5,886.1 720.5,883.5 Z" fill="#0a0a0a" shape-rendering="geometricPrecision"/><path d="M720.8,879 H749.2 V883 Q749.2,884.7 747,884.7 H723 Q720.8,884.7 720.8,883 Z" fill="url(#rim)" shape-rendering="geometricPrecision"/><path d="M720,879.5 V876 Q720.5,871.5 728,871.5 H742 Q749.5,871.5 750,876 V879.5 Z" fill="url(#dome)" stroke="#000" stroke-width="0.8" shape-rendering="geometricPrecision"/><path d="M721,874.7 H749 M720,877.3 H750" stroke="#140000" stroke-width="0.9" fill="none"/>
<rect x="1078.5" y="877.5" width="11" height="6.5" fill="#f6f6fa" stroke="#000" stroke-width="0.8" /><rect x="1084.5" y="878.2" width="4.5" height="5.8" fill="#d4d4dc" stroke="none" stroke-width="1" /><rect x="1080.8" y="873" width="6.4" height="4.5" fill="#e4d81c" stroke="#6a6408" stroke-width="0.5" /><path d="M1068.5,890.5 H1099.5 V895 Q1099.5,897.6 1096,897.6 H1072 Q1068.5,897.6 1068.5,895 Z" fill="#0a0a0a" shape-rendering="geometricPrecision"/><path d="M1068.8,890.5 H1099.2 V894.5 Q1099.2,896.2 1097,896.2 H1071 Q1068.8,896.2 1068.8,894.5 Z" fill="url(#rim)" shape-rendering="geometricPrecision"/><path d="M1068,891 V887.5 Q1068.5,883 1076,883 H1092 Q1099.5,883 1100,887.5 V891 Z" fill="url(#dome)" stroke="#000" stroke-width="0.8" shape-rendering="geometricPrecision"/><path d="M1069,886.2 H1099 M1068,888.8 H1100" stroke="#140000" stroke-width="0.9" fill="none"/>
</g>
<g>
<polyline points="264.5,826.5 283,826.5 283,829.5 264.5,829.5 264.5,826.5" fill="none" stroke="#c8ccd8" stroke-width="0.8" />
<line x1="270" y1="828" x2="282" y2="828" stroke="#46608a" stroke-width="2"/>
<polyline points="286,832 283.5,895" fill="none" stroke="#18b0c8" stroke-width="1.8" />
<polygon points="281.3,893 285.8,893 283.4,905" fill="#18b0c8" stroke="none" stroke-width="1" />
<line x1="288" y1="829.5" x2="312" y2="829.5" stroke="#a82030" stroke-width="2"/>
<line x1="296" y1="829.5" x2="306" y2="829.5" stroke="#d8d8e0" stroke-width="0.8"/>
<polygon points="310,826.3 310,833.5 322,830" fill="#8c1c2c" stroke="none" stroke-width="1" />
<circle cx="286" cy="827" r="3.6" fill="#28a028" stroke="#145014" stroke-width="0.6" shape-rendering="geometricPrecision"/>
<text x="323.5" y="834.5" font-family="'Liberation Sans',sans-serif" font-size="11" fill="#e01020">X</text>
<text x="278.5" y="916" font-family="'Liberation Sans',sans-serif" font-size="11.5" fill="#d8dce8">Z</text>
<text x="282.5" y="830" font-family="'Liberation Sans',sans-serif" font-size="9" fill="#e8ffe8">Y</text>
<rect x="121" y="944" width="24.5" height="24.5" fill="#64789c" stroke="#d0d4e0" stroke-width="0.8" />
<polygon points="118.3,945 120.6,945 119.9,1001 117,1001" fill="#00f4ff" stroke="none" stroke-width="0" shape-rendering="crispEdges"/>
<line x1="120.4" y1="990" x2="120" y2="1001" stroke="#064048" stroke-width="0.8"/>
<line x1="122" y1="942.5" x2="146" y2="942.5" stroke="#e81010" stroke-width="3"/>
<line x1="124" y1="941.5" x2="144" y2="941.5" stroke="#f0e020" stroke-width="1"/>
<polygon points="145,938.5 145,946.5 155,942.7" fill="#c01010" stroke="none" stroke-width="1" />
<circle cx="119.5" cy="939" r="3.6" fill="#28a028" stroke="#145014" stroke-width="0.6" shape-rendering="geometricPrecision"/>
<text x="156.5" y="947.5" font-family="'Liberation Sans',sans-serif" font-size="11" fill="#e01020">X</text>
<text x="116" y="942" font-family="'Liberation Sans',sans-serif" font-size="9" fill="#e8ffe8">Y</text>
</g>
</svg>
<svg width="1920" height="1048" viewBox="0 0 1920 1048" style="z-index:2;pointer-events:none">
<defs>
<linearGradient id="iBlue" x1="0" y1="0" x2="1" y2="0"><stop offset="0" stop-color="#9cc0f4"/><stop offset="0.55" stop-color="#5a86d4"/><stop offset="1" stop-color="#3452a4"/></linearGradient>
<linearGradient id="iBlueD" x1="0" y1="0" x2="1" y2="0"><stop offset="0" stop-color="#7aa4e8"/><stop offset="0.6" stop-color="#4468bc"/><stop offset="1" stop-color="#283e8c"/></linearGradient>
<linearGradient id="iPale" x1="0" y1="0" x2="1" y2="0"><stop offset="0" stop-color="#e4ecfc"/><stop offset="1" stop-color="#b4c0e0"/></linearGradient>
<linearGradient id="iPage" x1="0" y1="0" x2="1" y2="1"><stop offset="0" stop-color="#ffffff"/><stop offset="1" stop-color="#9cbcf4"/></linearGradient>
<linearGradient id="iFold" x1="0" y1="0" x2="0" y2="1"><stop offset="0" stop-color="#fce9a4"/><stop offset="1" stop-color="#f0c050"/></linearGradient>
<linearGradient id="iGreenA" x1="0" y1="0" x2="0" y2="1"><stop offset="0" stop-color="#58d048"/><stop offset="1" stop-color="#108818"/></linearGradient>
<linearGradient id="iGray" x1="0" y1="0" x2="0" y2="1"><stop offset="0" stop-color="#d0d0d0"/><stop offset="1" stop-color="#808080"/></linearGradient>
<linearGradient id="iCubeT" x1="0" y1="0" x2="0" y2="1"><stop offset="0" stop-color="#60e040"/><stop offset="1" stop-color="#18a010"/></linearGradient>
<linearGradient id="iCubeR" x1="0" y1="0" x2="1" y2="0"><stop offset="0" stop-color="#a0f870"/><stop offset="1" stop-color="#20a818"/></linearGradient>
<radialGradient id="iLens" cx="0.4" cy="0.35" r="0.7"><stop offset="0" stop-color="#f4faff"/><stop offset="1" stop-color="#8cb4e4"/></radialGradient>
<radialGradient id="iSmile" cx="0.4" cy="0.3" r="0.8"><stop offset="0" stop-color="#fff8a0"/><stop offset="1" stop-color="#f0b020"/></radialGradient>
<radialGradient id="iEarth" cx="0.35" cy="0.3" r="0.8"><stop offset="0" stop-color="#4878f0"/><stop offset="1" stop-color="#0c1c80"/></radialGradient>
</defs>
<rect x="2" y="3" width="16" height="15.6" fill="#6cb82c"/><path d="M5,6.8 L9.2,16 L10.8,16 L15.2,5.6 L12.8,5.6 L10,12.6 L7,6.8 Z" fill="#fff"/><circle cx="5.6" cy="4.9" r="1" fill="#fff"/>
<path d="M20.5,6 V19" stroke="#9c9c9c" stroke-width="1"/>
<path d="M33.6,4.4 H42 L45.6,8 V19.6 H33.6 Z" fill="url(#iPage)" stroke="#000" stroke-width="1.3"/><path d="M41.6,4.6 V8.4 H45.4" fill="#fff" stroke="#000" stroke-width="0.8"/>
<g transform="translate(55.5,4.2) scale(1.02)"><path d="M0.5,3 L5.4,1.6 L7,3.4 L12.6,2.4 L12.6,13.4 L0.8,16 Z" fill="#f4d070" stroke="#c49828" stroke-width="0.7"/><path d="M0.8,16 L3.6,7.6 L16,5.4 L12.8,13.4 Z" fill="url(#iFold)" stroke="#c49828" stroke-width="0.7"/></g>
<path d="M60,8.6 Q62,4.4 67.6,5.4 L67,3.8 L73,7.6 L68.4,12.4 L68.4,10.2 Q64.6,8.6 62.6,11.6 Z" fill="url(#iGreenA)" stroke="#187818" stroke-width="0.5"/>
<path d="M83,5.4 H90.6 V19 H83" fill="none" stroke="#50c838" stroke-width="1"/>
<g transform="translate(79,3.4) scale(0.55)"><path d="M0.5,3 L5.4,1.6 L7,3.4 L12.6,2.4 L12.6,13.4 L0.8,16 Z" fill="#f4d070" stroke="#c49828" stroke-width="0.7"/><path d="M0.8,16 L3.6,7.6 L16,5.4 L12.8,13.4 Z" fill="url(#iFold)" stroke="#c49828" stroke-width="0.7"/></g>
<g transform="translate(79,11.6) scale(0.55)"><path d="M0.5,3 L5.4,1.6 L7,3.4 L12.6,2.4 L12.6,13.4 L0.8,16 Z" fill="#f4d070" stroke="#c49828" stroke-width="0.7"/><path d="M0.8,16 L3.6,7.6 L16,5.4 L12.8,13.4 Z" fill="url(#iFold)" stroke="#c49828" stroke-width="0.7"/></g>
<path d="M89,7.6 H94 L96.6,10 V16.8 H89 Z" fill="url(#iPage)" stroke="#181818" stroke-width="0.9"/>
<g transform="translate(103.4,4.2) scale(1)"><rect x="0" y="0" width="16" height="16" rx="1.2" fill="#4870b8" stroke="#2c4888" stroke-width="0.8"/><rect x="2.4" y="0.8" width="11.2" height="8.4" fill="#f8f8f8"/><rect x="2.4" y="0.8" width="11.2" height="1.8" fill="#e83828"/><path d="M3.4,4.4 H12.6 M3.4,6 H12.6 M3.4,7.6 H12.6" stroke="#a8a8a8" stroke-width="0.7"/><rect x="3.6" y="10.6" width="8.8" height="5" fill="#c8c8c8" stroke="#303848" stroke-width="0.6"/><rect x="5" y="11.4" width="2.2" height="3.6" fill="#303848"/></g>
<g transform="translate(132.4,3.8) scale(0.72)"><rect x="0" y="0" width="16" height="16" rx="1.2" fill="#4870b8" stroke="#2c4888" stroke-width="0.8"/><rect x="2.4" y="0.8" width="11.2" height="8.4" fill="#f8f8f8"/><rect x="2.4" y="0.8" width="11.2" height="1.8" fill="#e83828"/><path d="M3.4,4.4 H12.6 M3.4,6 H12.6 M3.4,7.6 H12.6" stroke="#a8a8a8" stroke-width="0.7"/><rect x="3.6" y="10.6" width="8.8" height="5" fill="#c8c8c8" stroke="#303848" stroke-width="0.6"/><rect x="5" y="11.4" width="2.2" height="3.6" fill="#303848"/></g>
<g transform="translate(127.4,9.6) scale(0.72)"><rect x="0" y="0" width="16" height="16" rx="1.2" fill="#4870b8" stroke="#2c4888" stroke-width="0.8"/><rect x="2.4" y="0.8" width="11.2" height="8.4" fill="#f8f8f8"/><rect x="2.4" y="0.8" width="11.2" height="1.8" fill="#e83828"/><path d="M3.4,4.4 H12.6 M3.4,6 H12.6 M3.4,7.6 H12.6" stroke="#a8a8a8" stroke-width="0.7"/><rect x="3.6" y="10.6" width="8.8" height="5" fill="#c8c8c8" stroke="#303848" stroke-width="0.6"/><rect x="5" y="11.4" width="2.2" height="3.6" fill="#303848"/></g>
<g transform="translate(149.6,2.4) scale(0.74)"><rect x="0" y="0" width="16" height="16" rx="1.2" fill="#4870b8" stroke="#2c4888" stroke-width="0.8"/><rect x="2.4" y="0.8" width="11.2" height="8.4" fill="#f8f8f8"/><rect x="2.4" y="0.8" width="11.2" height="1.8" fill="#e83828"/><path d="M3.4,4.4 H12.6 M3.4,6 H12.6 M3.4,7.6 H12.6" stroke="#a8a8a8" stroke-width="0.7"/><rect x="3.6" y="10.6" width="8.8" height="5" fill="#c8c8c8" stroke="#303848" stroke-width="0.6"/><rect x="5" y="11.4" width="2.2" height="3.6" fill="#303848"/></g>
<path d="M163.4,8 Q168.4,6.4 168.2,10.8" fill="none" stroke="#28b028" stroke-width="1.7"/><path d="M161.4,6.6 L165,3.2 L165.6,8.4 Z" fill="#28b028"/>
<g transform="translate(159.2,10.6) scale(1)"><path d="M0,2.6 L5,0 L10,2.2 L5,4.8 Z" fill="#f4f4f4" stroke="#303030" stroke-width="0.6"/><path d="M0,2.6 L5,4.8 L5,11 L0,8.4 Z" fill="#8c8c8c" stroke="#303030" stroke-width="0.6"/><path d="M5,4.8 L10,2.2 L10,8.2 L5,11 Z" fill="#c4c4c4" stroke="#303030" stroke-width="0.6"/></g>
<rect x="179" y="4.2" width="10" height="9" fill="#c4d8f8" stroke="#586478" stroke-width="0.8"/><path d="M184,3.6 L187.6,7.6 H185.6 V10.6 H182.4 V7.6 H180.4 Z" fill="#20c028"/>
<path d="M175.4,14 L178,11.6 H190 L192.4,14 V19.6 H175.4 Z" fill="#e8e8e8" stroke="#606060" stroke-width="0.8"/><rect x="177" y="16.4" width="13.8" height="2.2" fill="#fcfcfc" stroke="#909090" stroke-width="0.5"/>
<circle cx="207.4" cy="11.6" r="9.6" fill="#6aa83c"/><circle cx="207.4" cy="11.6" r="9.2" fill="none" stroke="#4c8828" stroke-width="0.8"/>
<path d="M210.6,14.6 L216.2,20" stroke="#707070" stroke-width="3" stroke-linecap="round"/><path d="M210.6,14.6 L216,19.8" stroke="#dcdcdc" stroke-width="1.6" stroke-linecap="round"/><circle cx="206.4" cy="10.8" r="5.6" fill="url(#iLens)" stroke="#d0d8e4" stroke-width="1.4"/><path d="M206.6,8 L206,13" stroke="#80a8d8" stroke-width="0.8"/>
<g transform="translate(224,3.4) scale(1)"><ellipse cx="8.5" cy="16" rx="8" ry="1.6" fill="#888" opacity="0.35"/><path d="M0.4,6.2 L7.6,0.4 L7.6,4 Q15,4.4 15,11 Q14.6,15.4 10,16.4 Q12,13.6 10.6,11 Q9.6,9.2 7.6,9.2 L7.6,12.6 Z" fill="url(#iGray)" stroke="#8c8c8c" stroke-width="0.6"/></g>
<g transform="translate(262.4,3.4) scale(-1,1)"><ellipse cx="8.5" cy="16" rx="8" ry="1.6" fill="#888" opacity="0.35"/><path d="M0.4,6.2 L7.6,0.4 L7.6,4 Q15,4.4 15,11 Q14.6,15.4 10,16.4 Q12,13.6 10.6,11 Q9.6,9.2 7.6,9.2 L7.6,12.6 Z" fill="url(#iGray)" stroke="#8c8c8c" stroke-width="0.6"/></g>
<g transform="translate(272,3.2) scale(1)"><ellipse cx="8.5" cy="16" rx="8" ry="1.6" fill="#888" opacity="0.35"/><path d="M0.4,6.2 L7.6,0.4 L7.6,4 Q15,4.4 15,11 Q14.6,15.4 10,16.4 Q12,13.6 10.6,11 Q9.6,9.2 7.6,9.2 L7.6,12.6 Z" fill="url(#iBlue)" stroke="#4470c0" stroke-width="0.6"/></g>
<path d="M270.4,10.8 H277.2 M270.4,21 H277.2" stroke="#8c6c18" stroke-width="1.4"/><path d="M271.2,11.4 Q271.4,15 273.4,16 Q271.4,17 271.2,20.4 H276.4 Q276.2,17 274.2,16 Q276.2,15 276.4,11.4 Z" fill="#d8c068" stroke="#7c5c10" stroke-width="0.7"/>
<path d="M295,9.4 H302" stroke="#000" stroke-width="1.2"/><path d="M295,12.2 H302 L298.5,15.4 Z" fill="#000"/>
<path d="M312.5,6 V19" stroke="#9c9c9c" stroke-width="1"/>
<path d="M1799,10.5 H1809" stroke="#000" stroke-width="1"/>
<path d="M1845.5,8.5 H1852.5 V15.5 H1845.5 Z M1847.5,8.5 V6.5 H1854.5 V13.5 H1852.5" fill="none" stroke="#000" stroke-width="1"/>
<path d="M1890,5.5 L1900,15.5 M1900,5.5 L1890,15.5" stroke="#000" stroke-width="1.1"/>
<path d="M1870,37.5 H1879" stroke="#9a9a9a" stroke-width="1"/>
<path d="M1888.5,30.5 H1894.5 V36.5 H1888.5 Z M1890.5,30.5 V28.5 H1896.5 V34.5 H1894.5" fill="none" stroke="#9a9a9a" stroke-width="1"/>
<path d="M1906,28.5 L1914,36.5 M1914,28.5 L1906,36.5" stroke="#9a9a9a" stroke-width="1"/>
<g transform="translate(23,68) scale(1)"><path d="M1,3.2 L8,1.6 L13,3.4 L6,5 Z" fill="#6878f0" stroke="#4050c0" stroke-width="0.4"/><path d="M1,5.8 L6,7.6 L13,6 L13,4.4 L6,6 L1,4.2 Z" fill="#f4f4f8" stroke="#909090" stroke-width="0.4"/><path d="M1,8.4 L6,10.2 L13,8.6 L13,7 L6,8.6 L1,6.8 Z" fill="#d8d8e0" stroke="#808080" stroke-width="0.4"/><path d="M1.4,10.6 L6,12.4 L12,11 L12,9.4 L6,11 L1.4,9.2 Z" fill="#f0f0f0" stroke="#808080" stroke-width="0.4"/><ellipse cx="11.6" cy="15" rx="7" ry="4.2" fill="#c89880" stroke="#7c5038" stroke-width="0.6" transform="rotate(-8 11.6 15)"/><circle cx="8.2" cy="16.6" r="1.7" fill="#1848f0"/><circle cx="12.8" cy="16.2" r="1.7" fill="#18a828"/><circle cx="14.6" cy="12.6" r="1.6" fill="#e01818"/><path d="M18.6,1.6 L12.4,11.4" stroke="#b05818" stroke-width="1.5"/><path d="M12.6,11 L10.2,14.2 L11.4,11" fill="#e8e8e8" stroke="#e8e8e8" stroke-width="1.4"/></g>
<g transform="translate(48,68) scale(1)"><path d="M8.4,0.8 H15.6 L18.6,3.6 V13.4 H8.4 Z" fill="url(#iPage)" stroke="#181818" stroke-width="1.1"/><path d="M3,5 H9.6 L12.4,7.6 V15.4 H3 Z" fill="url(#iPage)" stroke="#181818" stroke-width="1.1"/><g transform="translate(0.5,9.6) scale(0.9)"><path d="M0.4,8.4 Q5,2.4 11,1.8 Q16.4,2 19.8,6.4 Q16,9.4 10,9.8 Q4,9.8 0.4,8.4 Z" fill="#a4acd8"/><path d="M2,8 Q6,3.4 11,3 Q15,3.2 18,6 Q14,8.6 10,8.8 Q5,8.8 2,8 Z" fill="#c4c8ec"/><ellipse cx="9.4" cy="5.8" rx="4.9" ry="3.9" fill="#42588c"/><ellipse cx="9.4" cy="5.8" rx="2.4" ry="2.3" fill="#182444"/><circle cx="10.8" cy="4.4" r="0.9" fill="#dce8ff"/><path d="M0.2,8.6 Q5,2.2 11,1.6 Q16.6,1.8 20,6.6" fill="none" stroke="#20243c" stroke-width="1.9"/><path d="M3.6,3.6 L2.6,1.8 M6,2.2 L5.2,0.2 M8.6,1.2 L8.4,-0.8 M11.6,1 L12.2,-0.8 M14.4,1.6 L15.8,0 M16.8,2.8 L18.6,1.4 M18.6,4.6 L20.4,3.4" stroke="#20243c" stroke-width="1"/><path d="M0.6,8.8 Q5,10.6 10,10.2 Q15,9.6 18,7.6" fill="none" stroke="#a87890" stroke-width="0.7"/></g></g>
<g transform="translate(74.5,68) scale(1)"><g transform="translate(0,1.4) scale(1)"><path d="M0.4,8.4 Q5,2.4 11,1.8 Q16.4,2 19.8,6.4 Q16,9.4 10,9.8 Q4,9.8 0.4,8.4 Z" fill="#a4acd8"/><path d="M2,8 Q6,3.4 11,3 Q15,3.2 18,6 Q14,8.6 10,8.8 Q5,8.8 2,8 Z" fill="#c4c8ec"/><ellipse cx="9.4" cy="5.8" rx="4.9" ry="3.9" fill="#42588c"/><ellipse cx="9.4" cy="5.8" rx="2.4" ry="2.3" fill="#182444"/><circle cx="10.8" cy="4.4" r="0.9" fill="#dce8ff"/><path d="M0.2,8.6 Q5,2.2 11,1.6 Q16.6,1.8 20,6.6" fill="none" stroke="#20243c" stroke-width="1.9"/><path d="M3.6,3.6 L2.6,1.8 M6,2.2 L5.2,0.2 M8.6,1.2 L8.4,-0.8 M11.6,1 L12.2,-0.8 M14.4,1.6 L15.8,0 M16.8,2.8 L18.6,1.4 M18.6,4.6 L20.4,3.4" stroke="#20243c" stroke-width="1"/><path d="M0.6,8.8 Q5,10.6 10,10.2 Q15,9.6 18,7.6" fill="none" stroke="#a87890" stroke-width="0.7"/></g><path d="M1.7999999999999998,15 H9.399999999999999 M5.6,11.2 V18.8" stroke="#8c9c7c" stroke-width="2.4" opacity="0.6"/><path d="M0.7999999999999998,14 H8.399999999999999 M4.6,10.2 V17.8" stroke="#78e838" stroke-width="2.4"/><g transform="translate(10,10.4) scale(1)"><path d="M-0.4,3.2 L4.6,8.8" stroke="#3c84e8" stroke-width="1.5"/><path d="M4.8,2 Q10,0 9.6,4.4 Q8.8,7.8 5.2,6.8" fill="none" stroke="#3c84e8" stroke-width="1.6"/></g></g>
<g transform="translate(100.5,68) scale(1)"><g transform="translate(0,1.4) scale(1)"><path d="M0.4,8.4 Q5,2.4 11,1.8 Q16.4,2 19.8,6.4 Q16,9.4 10,9.8 Q4,9.8 0.4,8.4 Z" fill="#a4acd8"/><path d="M2,8 Q6,3.4 11,3 Q15,3.2 18,6 Q14,8.6 10,8.8 Q5,8.8 2,8 Z" fill="#c4c8ec"/><ellipse cx="9.4" cy="5.8" rx="4.9" ry="3.9" fill="#42588c"/><ellipse cx="9.4" cy="5.8" rx="2.4" ry="2.3" fill="#182444"/><circle cx="10.8" cy="4.4" r="0.9" fill="#dce8ff"/><path d="M0.2,8.6 Q5,2.2 11,1.6 Q16.6,1.8 20,6.6" fill="none" stroke="#20243c" stroke-width="1.9"/><path d="M3.6,3.6 L2.6,1.8 M6,2.2 L5.2,0.2 M8.6,1.2 L8.4,-0.8 M11.6,1 L12.2,-0.8 M14.4,1.6 L15.8,0 M16.8,2.8 L18.6,1.4 M18.6,4.6 L20.4,3.4" stroke="#20243c" stroke-width="1"/><path d="M0.6,8.8 Q5,10.6 10,10.2 Q15,9.6 18,7.6" fill="none" stroke="#a87890" stroke-width="0.7"/></g><path d="M1.3999999999999997,16.2 H10.200000000000001" stroke="#9a9440" stroke-width="2.4"/><path d="M0.5999999999999996,15.2 H9.4" stroke="#f0ec00" stroke-width="2.4"/><g transform="translate(10,10.4) scale(1)"><path d="M-0.4,3.2 L4.6,8.8" stroke="#3c84e8" stroke-width="1.5"/><path d="M4.8,2 Q10,0 9.6,4.4 Q8.8,7.8 5.2,6.8" fill="none" stroke="#3c84e8" stroke-width="1.6"/></g></g>
<g transform="translate(126,68) scale(1)"><g transform="translate(0.5,1.2) scale(0.95)"><path d="M0.4,8.4 Q5,2.4 11,1.8 Q16.4,2 19.8,6.4 Q16,9.4 10,9.8 Q4,9.8 0.4,8.4 Z" fill="#a4acd8"/><path d="M2,8 Q6,3.4 11,3 Q15,3.2 18,6 Q14,8.6 10,8.8 Q5,8.8 2,8 Z" fill="#c4c8ec"/><ellipse cx="9.4" cy="5.8" rx="4.9" ry="3.9" fill="#42588c"/><ellipse cx="9.4" cy="5.8" rx="2.4" ry="2.3" fill="#182444"/><circle cx="10.8" cy="4.4" r="0.9" fill="#dce8ff"/><path d="M0.2,8.6 Q5,2.2 11,1.6 Q16.6,1.8 20,6.6" fill="none" stroke="#20243c" stroke-width="1.9"/><path d="M3.6,3.6 L2.6,1.8 M6,2.2 L5.2,0.2 M8.6,1.2 L8.4,-0.8 M11.6,1 L12.2,-0.8 M14.4,1.6 L15.8,0 M16.8,2.8 L18.6,1.4 M18.6,4.6 L20.4,3.4" stroke="#20243c" stroke-width="1"/><path d="M0.6,8.8 Q5,10.6 10,10.2 Q15,9.6 18,7.6" fill="none" stroke="#a87890" stroke-width="0.7"/></g><g transform="translate(1.2,7.2) scale(1)"><rect x="0" y="0" width="6.6" height="12.6" rx="2.4" fill="#101010"/><circle cx="3.3" cy="3.4" r="2.3" fill="#f8c010"/><circle cx="3.3" cy="9.2" r="2.3" fill="#18d828"/><circle cx="2.7" cy="2.7" r="0.8" fill="#fff" opacity="0.6"/><circle cx="2.7" cy="8.5" r="0.8" fill="#fff" opacity="0.6"/></g><g transform="translate(12.6,7.2) scale(1)"><rect x="0" y="0" width="6.6" height="12.6" rx="2.4" fill="#101010"/><circle cx="3.3" cy="3.4" r="2.3" fill="#f01818"/><circle cx="3.3" cy="9.2" r="2.3" fill="#f8c010"/><circle cx="2.7" cy="2.7" r="0.8" fill="#fff" opacity="0.6"/><circle cx="2.7" cy="8.5" r="0.8" fill="#fff" opacity="0.6"/></g></g>
<g transform="translate(152.5,68) scale(1)"><g transform="translate(0.5,1) scale(0.95)"><path d="M0.4,8.4 Q5,2.4 11,1.8 Q16.4,2 19.8,6.4 Q16,9.4 10,9.8 Q4,9.8 0.4,8.4 Z" fill="#a4acd8"/><path d="M2,8 Q6,3.4 11,3 Q15,3.2 18,6 Q14,8.6 10,8.8 Q5,8.8 2,8 Z" fill="#c4c8ec"/><ellipse cx="9.4" cy="5.8" rx="4.9" ry="3.9" fill="#42588c"/><ellipse cx="9.4" cy="5.8" rx="2.4" ry="2.3" fill="#182444"/><circle cx="10.8" cy="4.4" r="0.9" fill="#dce8ff"/><path d="M0.2,8.6 Q5,2.2 11,1.6 Q16.6,1.8 20,6.6" fill="none" stroke="#20243c" stroke-width="1.9"/><path d="M3.6,3.6 L2.6,1.8 M6,2.2 L5.2,0.2 M8.6,1.2 L8.4,-0.8 M11.6,1 L12.2,-0.8 M14.4,1.6 L15.8,0 M16.8,2.8 L18.6,1.4 M18.6,4.6 L20.4,3.4" stroke="#20243c" stroke-width="1"/><path d="M0.6,8.8 Q5,10.6 10,10.2 Q15,9.6 18,7.6" fill="none" stroke="#a87890" stroke-width="0.7"/></g><g transform="translate(1.6,5) scale(0.98)"><path d="M1,8 A7,6 0 0 1 13,3.6 L12.4,0.6 L17,5.6 L11,8.4 L11.6,5.6 A4.6,3.6 0 0 0 4.6,8 Z" fill="#48b838" stroke="#1c7c1c" stroke-width="0.5"/><path d="M16.4,8.6 A7,6 0 0 1 4.6,13.6 L5.4,16.4 L0.4,11.6 L6.4,8.8 L5.8,11.4 A4.6,3.6 0 0 0 12.8,8.6 Z" fill="#e8dc18" stroke="#9c8c10" stroke-width="0.5"/></g></g>
<g transform="translate(178.5,68) scale(1)"><g transform="translate(0,1.4) scale(1)"><path d="M0.4,8.4 Q5,2.4 11,1.8 Q16.4,2 19.8,6.4 Q16,9.4 10,9.8 Q4,9.8 0.4,8.4 Z" fill="#a4acd8"/><path d="M2,8 Q6,3.4 11,3 Q15,3.2 18,6 Q14,8.6 10,8.8 Q5,8.8 2,8 Z" fill="#c4c8ec"/><ellipse cx="9.4" cy="5.8" rx="4.9" ry="3.9" fill="#42588c"/><ellipse cx="9.4" cy="5.8" rx="2.4" ry="2.3" fill="#182444"/><circle cx="10.8" cy="4.4" r="0.9" fill="#dce8ff"/><path d="M0.2,8.6 Q5,2.2 11,1.6 Q16.6,1.8 20,6.6" fill="none" stroke="#20243c" stroke-width="1.9"/><path d="M3.6,3.6 L2.6,1.8 M6,2.2 L5.2,0.2 M8.6,1.2 L8.4,-0.8 M11.6,1 L12.2,-0.8 M14.4,1.6 L15.8,0 M16.8,2.8 L18.6,1.4 M18.6,4.6 L20.4,3.4" stroke="#20243c" stroke-width="1"/><path d="M0.6,8.8 Q5,10.6 10,10.2 Q15,9.6 18,7.6" fill="none" stroke="#a87890" stroke-width="0.7"/></g><path d="M1.6,13.4 H8.4 M5,10.0 V16.8" stroke="#8c9c7c" stroke-width="2.2" opacity="0.6"/><path d="M0.6000000000000001,12.4 H7.4 M4,9.0 V15.8" stroke="#78e838" stroke-width="2.2"/><path d="M12,11.4 L7.2,19.4" stroke="#202020" stroke-width="1.2"/><path d="M12.0,19 H19.6" stroke="#9a9440" stroke-width="2.4"/><path d="M11.2,18 H18.8" stroke="#f0ec00" stroke-width="2.4"/></g>
<g transform="translate(204,68) scale(1)"><g transform="translate(0,1.4) scale(1)"><path d="M0.4,8.4 Q5,2.4 11,1.8 Q16.4,2 19.8,6.4 Q16,9.4 10,9.8 Q4,9.8 0.4,8.4 Z" fill="#a4acd8"/><path d="M2,8 Q6,3.4 11,3 Q15,3.2 18,6 Q14,8.6 10,8.8 Q5,8.8 2,8 Z" fill="#c4c8ec"/><ellipse cx="9.4" cy="5.8" rx="4.9" ry="3.9" fill="#42588c"/><ellipse cx="9.4" cy="5.8" rx="2.4" ry="2.3" fill="#182444"/><circle cx="10.8" cy="4.4" r="0.9" fill="#dce8ff"/><path d="M0.2,8.6 Q5,2.2 11,1.6 Q16.6,1.8 20,6.6" fill="none" stroke="#20243c" stroke-width="1.9"/><path d="M3.6,3.6 L2.6,1.8 M6,2.2 L5.2,0.2 M8.6,1.2 L8.4,-0.8 M11.6,1 L12.2,-0.8 M14.4,1.6 L15.8,0 M16.8,2.8 L18.6,1.4 M18.6,4.6 L20.4,3.4" stroke="#20243c" stroke-width="1"/><path d="M0.6,8.8 Q5,10.6 10,10.2 Q15,9.6 18,7.6" fill="none" stroke="#a87890" stroke-width="0.7"/></g><path d="M9,15.4 H19 M14,10.4 V20.4" stroke="#8c9c7c" stroke-width="2.8" opacity="0.6"/><path d="M8,14.4 H18 M13,9.4 V19.4" stroke="#78e838" stroke-width="2.8"/></g>
<g transform="translate(230,68) scale(1)"><g transform="translate(0,1.4) scale(1)"><path d="M0.4,8.4 Q5,2.4 11,1.8 Q16.4,2 19.8,6.4 Q16,9.4 10,9.8 Q4,9.8 0.4,8.4 Z" fill="#a4acd8"/><path d="M2,8 Q6,3.4 11,3 Q15,3.2 18,6 Q14,8.6 10,8.8 Q5,8.8 2,8 Z" fill="#c4c8ec"/><ellipse cx="9.4" cy="5.8" rx="4.9" ry="3.9" fill="#42588c"/><ellipse cx="9.4" cy="5.8" rx="2.4" ry="2.3" fill="#182444"/><circle cx="10.8" cy="4.4" r="0.9" fill="#dce8ff"/><path d="M0.2,8.6 Q5,2.2 11,1.6 Q16.6,1.8 20,6.6" fill="none" stroke="#20243c" stroke-width="1.9"/><path d="M3.6,3.6 L2.6,1.8 M6,2.2 L5.2,0.2 M8.6,1.2 L8.4,-0.8 M11.6,1 L12.2,-0.8 M14.4,1.6 L15.8,0 M16.8,2.8 L18.6,1.4 M18.6,4.6 L20.4,3.4" stroke="#20243c" stroke-width="1"/><path d="M0.6,8.8 Q5,10.6 10,10.2 Q15,9.6 18,7.6" fill="none" stroke="#a87890" stroke-width="0.7"/></g><path d="M8.200000000000001,15.4 H19.400000000000002" stroke="#9a9440" stroke-width="2.6"/><path d="M7.4,14.4 H18.6" stroke="#f0ec00" stroke-width="2.6"/></g>
<g transform="translate(273,68) scale(1)"><g transform="translate(1.2,2.4) scale(1.02)"><path d="M1,8 A7,6 0 0 1 13,3.6 L12.4,0.6 L17,5.6 L11,8.4 L11.6,5.6 A4.6,3.6 0 0 0 4.6,8 Z" fill="#5c98e0" stroke="#3c70c0" stroke-width="0.5"/><path d="M16.4,8.6 A7,6 0 0 1 4.6,13.6 L5.4,16.4 L0.4,11.6 L6.4,8.8 L5.8,11.4 A4.6,3.6 0 0 0 12.8,8.6 Z" fill="#5c98e0" stroke="#3c70c0" stroke-width="0.5"/></g></g>
<g transform="translate(304.5,70) scale(1)"><path d="M0,2.3 V13.7 A5.5,2.3 0 0 0 11,13.7 V2.3 A5.5,2.3 0 0 0 0,2.3 Z" fill="none" stroke="#282828" stroke-width="1.1"/><ellipse cx="5.5" cy="2.3" rx="5.5" ry="2.3" fill="none" stroke="#282828" stroke-width="1.1"/><path d="M0,13.7 A5.5,2.3 0 0 1 11,13.7" fill="none" stroke="#282828" stroke-width="0.8800000000000001" opacity="0.8"/></g>
<g transform="translate(330.5,70) scale(1)"><path d="M0,2.3 V13.7 A5.5,2.3 0 0 0 11,13.7 V2.3 A5.5,2.3 0 0 0 0,2.3 Z" fill="none" stroke="#282828" stroke-width="1.1"/><ellipse cx="5.5" cy="2.3" rx="5.5" ry="2.3" fill="none" stroke="#282828" stroke-width="1.1"/><path d="M0,13.7 A5.5,2.3 0 0 1 11,13.7" fill="none" stroke="#282828" stroke-width="0.8800000000000001" opacity="0.8"/></g>
<g transform="translate(356.5,70) scale(1)"><path d="M0,2.3 V13.7 A5.5,2.3 0 0 0 11,13.7 V2.3 A5.5,2.3 0 0 0 0,2.3 Z" fill="none" stroke="#282828" stroke-width="1.1"/><ellipse cx="5.5" cy="2.3" rx="5.5" ry="2.3" fill="none" stroke="#282828" stroke-width="1.1"/><path d="M0,13.7 A5.5,2.3 0 0 1 11,13.7" fill="none" stroke="#282828" stroke-width="0.8800000000000001" opacity="0.8"/></g>
<g transform="translate(382.5,70) scale(1)"><ellipse cx="9.5" cy="15" rx="5.5" ry="1.8" fill="#707480" opacity="0.55"/><path d="M0,2.3 V13.7 A5.5,2.3 0 0 0 11,13.7 V2.3 A5.5,2.3 0 0 0 0,2.3 Z" fill="url(#iBlue)" stroke="#18e0f0" stroke-width="1.3"/><ellipse cx="5.5" cy="2.3" rx="5.5" ry="2.3" fill="#4c68c0" stroke="#18e0f0" stroke-width="1.3"/></g>
<g transform="translate(408.5,70) scale(1)"><ellipse cx="9.5" cy="15" rx="5.5" ry="1.8" fill="#707480" opacity="0.55"/><path d="M0,2.3 V13.7 A5.5,2.3 0 0 0 11,13.7 V2.3 A5.5,2.3 0 0 0 0,2.3 Z" fill="url(#iBlueD)" stroke="#101828" stroke-width="1.1"/><ellipse cx="5.5" cy="2.3" rx="5.5" ry="2.3" fill="#3c5cb4" stroke="#101828" stroke-width="1.1"/></g>
<g transform="translate(434.5,70) scale(1)"><ellipse cx="9.5" cy="15" rx="5.5" ry="1.8" fill="#707480" opacity="0.55"/><path d="M0,2.3 V13.7 A5.5,2.3 0 0 0 11,13.7 V2.3 A5.5,2.3 0 0 0 0,2.3 Z" fill="url(#iPale)" stroke="#30e4f0" stroke-width="1.2"/><ellipse cx="5.5" cy="2.3" rx="5.5" ry="2.3" fill="#d8e0f4" stroke="#30e4f0" stroke-width="1.2"/><path d="M0,13.7 A5.5,2.3 0 0 1 11,13.7" fill="none" stroke="#30e4f0" stroke-width="0.96" opacity="0.8"/></g>
<g transform="translate(460.5,70) scale(1)"><ellipse cx="9.5" cy="15" rx="5.5" ry="1.8" fill="#707480" opacity="0.55"/><path d="M0,2.3 V13.7 A5.5,2.3 0 0 0 11,13.7 V2.3 A5.5,2.3 0 0 0 0,2.3 Z" fill="url(#iPale)" stroke="#485068" stroke-width="1.1"/><ellipse cx="5.5" cy="2.3" rx="5.5" ry="2.3" fill="#ccd8f0" stroke="#485068" stroke-width="1.1"/><path d="M0,13.7 A5.5,2.3 0 0 1 11,13.7" fill="none" stroke="#485068" stroke-width="0.8800000000000001" opacity="0.8"/></g>
<g transform="translate(487,70) scale(1)"><g transform="translate(0,0) scale(1)"><path d="M0,2.3 V13.7 A5.5,2.3 0 0 0 11,13.7 V2.3 A5.5,2.3 0 0 0 0,2.3 Z" fill="#e8e8ec" stroke="#303030" stroke-width="1.1"/><ellipse cx="5.5" cy="2.3" rx="5.5" ry="2.3" fill="#e8e8ec" stroke="#303030" stroke-width="1.1"/></g><path d="M2.5,3.6 Q4.5,8 2.6,14.6 M5,4.4 Q3.6,9 5.6,15.4 M7.4,4.2 Q9,9.5 7.2,15.2 M9.2,3.6 Q7.8,8 9.4,13.6 M3.4,6 L7.6,12" fill="none" stroke="#303030" stroke-width="0.8"/></g>
<g transform="translate(507,68) scale(1)"><g transform="translate(0.6,0) scale(1)"><path d="M0,2.3 V11.3 A4.3,2.3 0 0 0 8.6,11.3 V2.3 A4.3,2.3 0 0 0 0,2.3 Z" fill="#f4f4f4" stroke="#404040" stroke-width="1.1"/><ellipse cx="4.3" cy="2.3" rx="4.3" ry="2.3" fill="#f4f4f4" stroke="#404040" stroke-width="1.1"/></g><path d="M10.4,3.4 Q12,0.6 15.4,1 L14.4,-0.4 L18,2.8 L13.6,4.6 L14,3 Q12.4,3 11.4,4.6 Z" fill="#28b828"/><path d="M2,17.6 Q4,20.4 8,19.6 L7.6,21 L10.6,17.4 L6.4,16.2 L6.8,17.8 Q5,18 3.6,16.6 Z" fill="#28b828"/><g transform="translate(9.8,5.6) scale(1)"><path d="M0,2.3 V11.3 A4.5,2.3 0 0 0 9,11.3 V2.3 A4.5,2.3 0 0 0 0,2.3 Z" fill="url(#iBlue)" stroke="#182848" stroke-width="1.1"/><ellipse cx="4.5" cy="2.3" rx="4.5" ry="2.3" fill="#4c6cc4" stroke="#182848" stroke-width="1.1"/></g></g>
<g transform="translate(533,68) scale(1)"><g transform="translate(0.8,1.6) scale(1)"><path d="M0,2.3 V14.099999999999998 A5.2,2.3 0 0 0 10.4,14.099999999999998 V2.3 A5.2,2.3 0 0 0 0,2.3 Z" fill="url(#iBlue)" stroke="#101828" stroke-width="1.1"/><ellipse cx="5.2" cy="2.3" rx="5.2" ry="2.3" fill="#4c6cc4" stroke="#101828" stroke-width="1.1"/></g><g transform="translate(6.8,6.4) scale(0.74)"><path d="M1,8 A7,6 0 0 1 13,3.6 L12.4,0.6 L17,5.6 L11,8.4 L11.6,5.6 A4.6,3.6 0 0 0 4.6,8 Z" fill="#4c84d0" stroke="#3060b0" stroke-width="0.5"/><path d="M16.4,8.6 A7,6 0 0 1 4.6,13.6 L5.4,16.4 L0.4,11.6 L6.4,8.8 L5.8,11.4 A4.6,3.6 0 0 0 12.8,8.6 Z" fill="#4c84d0" stroke="#3060b0" stroke-width="0.5"/></g></g>
<g transform="translate(560,68) scale(1)"><path d="M1,2.6 L16.4,1.6 L15.4,14 L9,14.8 L9,16 L12,16.8 L4,16.8 L6.6,16 L6.6,14.8 L1.8,14.4 Z" fill="#4060a8" stroke="#a0a8b8" stroke-width="1.1"/><g transform="translate(2.4,1.4) scale(1)"><path d="M3,15.4 L11,6.6" stroke="#3c78d0" stroke-width="2.6" stroke-linecap="round"/><path d="M14.6,15.4 L5.2,5.4" stroke="#707070" stroke-width="3" stroke-linecap="round"/><path d="M14.6,15.4 L5.2,5.4" stroke="#e8e8e8" stroke-width="1.8" stroke-linecap="round"/><path d="M2.6,2.4 A3.2,3.2 0 1 0 7.4,4.6" fill="none" stroke="#e8e8e8" stroke-width="2.2"/><path d="M11,6.6 L14.4,2.4" stroke="#d8d8d8" stroke-width="1.6" stroke-linecap="round"/></g></g>
<g transform="translate(602,68) scale(1)"><g transform="translate(0.4,1) scale(1)"><g transform="translate(10,0.4) scale(0.95)"><path d="M0,2.6 L5,0 L10,2.2 L5,4.8 Z" fill="#fff" stroke="#303030" stroke-width="0.6"/><path d="M0,2.6 L5,4.8 L5,11 L0,8.4 Z" fill="#fff" stroke="#303030" stroke-width="0.6"/><path d="M5,4.8 L10,2.2 L10,8.2 L5,11 Z" fill="#fff" stroke="#303030" stroke-width="0.6"/></g><g transform="translate(0,0) scale(1.05)"><path d="M0,2.6 L5,0 L10,2.2 L5,4.8 Z" fill="#f4f4f4" stroke="#303030" stroke-width="0.6"/><path d="M0,2.6 L5,4.8 L5,11 L0,8.4 Z" fill="#8c8c8c" stroke="#303030" stroke-width="0.6"/><path d="M5,4.8 L10,2.2 L10,8.2 L5,11 Z" fill="#c4c4c4" stroke="#303030" stroke-width="0.6"/></g></g><path d="M1.6000000000000005,15.2 H9.2 M5.4,11.399999999999999 V19.0" stroke="#8c9c7c" stroke-width="2.4" opacity="0.6"/><path d="M0.6000000000000005,14.2 H8.2 M4.4,10.399999999999999 V18.0" stroke="#78e838" stroke-width="2.4"/><g transform="translate(10,10.6) scale(1)"><path d="M-0.4,3.2 L4.6,8.8" stroke="#3c84e8" stroke-width="1.5"/><path d="M4.8,2 Q10,0 9.6,4.4 Q8.8,7.8 5.2,6.8" fill="none" stroke="#3c84e8" stroke-width="1.6"/></g></g>
<g transform="translate(628,68) scale(1)"><g transform="translate(0.4,1) scale(1)"><g transform="translate(10,0.4) scale(0.95)"><path d="M0,2.6 L5,0 L10,2.2 L5,4.8 Z" fill="#fff" stroke="#303030" stroke-width="0.6"/><path d="M0,2.6 L5,4.8 L5,11 L0,8.4 Z" fill="#fff" stroke="#303030" stroke-width="0.6"/><path d="M5,4.8 L10,2.2 L10,8.2 L5,11 Z" fill="#fff" stroke="#303030" stroke-width="0.6"/></g><g transform="translate(0,0) scale(1.05)"><path d="M0,2.6 L5,0 L10,2.2 L5,4.8 Z" fill="#f4f4f4" stroke="#303030" stroke-width="0.6"/><path d="M0,2.6 L5,4.8 L5,11 L0,8.4 Z" fill="#8c8c8c" stroke="#303030" stroke-width="0.6"/><path d="M5,4.8 L10,2.2 L10,8.2 L5,11 Z" fill="#c4c4c4" stroke="#303030" stroke-width="0.6"/></g></g><g transform="translate(1.2,7.2) scale(1)"><rect x="0" y="0" width="6.6" height="12.6" rx="2.4" fill="#101010"/><circle cx="3.3" cy="3.4" r="2.3" fill="#f8c010"/><circle cx="3.3" cy="9.2" r="2.3" fill="#18d828"/><circle cx="2.7" cy="2.7" r="0.8" fill="#fff" opacity="0.6"/><circle cx="2.7" cy="8.5" r="0.8" fill="#fff" opacity="0.6"/></g><g transform="translate(12.6,7.2) scale(1)"><rect x="0" y="0" width="6.6" height="12.6" rx="2.4" fill="#101010"/><circle cx="3.3" cy="3.4" r="2.3" fill="#f01818"/><circle cx="3.3" cy="9.2" r="2.3" fill="#f8c010"/><circle cx="2.7" cy="2.7" r="0.8" fill="#fff" opacity="0.6"/><circle cx="2.7" cy="8.5" r="0.8" fill="#fff" opacity="0.6"/></g></g>
<g transform="translate(654.5,68) scale(1)"><g transform="translate(0.4,1) scale(1)"><g transform="translate(10,0.4) scale(0.95)"><path d="M0,2.6 L5,0 L10,2.2 L5,4.8 Z" fill="#fff" stroke="#303030" stroke-width="0.6"/><path d="M0,2.6 L5,4.8 L5,11 L0,8.4 Z" fill="#fff" stroke="#303030" stroke-width="0.6"/><path d="M5,4.8 L10,2.2 L10,8.2 L5,11 Z" fill="#fff" stroke="#303030" stroke-width="0.6"/></g><g transform="translate(0,0) scale(1.05)"><path d="M0,2.6 L5,0 L10,2.2 L5,4.8 Z" fill="#f4f4f4" stroke="#303030" stroke-width="0.6"/><path d="M0,2.6 L5,4.8 L5,11 L0,8.4 Z" fill="#8c8c8c" stroke="#303030" stroke-width="0.6"/><path d="M5,4.8 L10,2.2 L10,8.2 L5,11 Z" fill="#c4c4c4" stroke="#303030" stroke-width="0.6"/></g></g><g transform="translate(1.6,5.2) scale(0.98)"><path d="M1,8 A7,6 0 0 1 13,3.6 L12.4,0.6 L17,5.6 L11,8.4 L11.6,5.6 A4.6,3.6 0 0 0 4.6,8 Z" fill="#48b838" stroke="#1c7c1c" stroke-width="0.5"/><path d="M16.4,8.6 A7,6 0 0 1 4.6,13.6 L5.4,16.4 L0.4,11.6 L6.4,8.8 L5.8,11.4 A4.6,3.6 0 0 0 12.8,8.6 Z" fill="#e8dc18" stroke="#9c8c10" stroke-width="0.5"/></g></g>
<g transform="translate(680.5,68) scale(1)"><g transform="translate(0.4,1) scale(1)"><g transform="translate(10,0.4) scale(0.95)"><path d="M0,2.6 L5,0 L10,2.2 L5,4.8 Z" fill="#fff" stroke="#303030" stroke-width="0.6"/><path d="M0,2.6 L5,4.8 L5,11 L0,8.4 Z" fill="#fff" stroke="#303030" stroke-width="0.6"/><path d="M5,4.8 L10,2.2 L10,8.2 L5,11 Z" fill="#fff" stroke="#303030" stroke-width="0.6"/></g><g transform="translate(0,0) scale(1.05)"><path d="M0,2.6 L5,0 L10,2.2 L5,4.8 Z" fill="#f4f4f4" stroke="#303030" stroke-width="0.6"/><path d="M0,2.6 L5,4.8 L5,11 L0,8.4 Z" fill="#8c8c8c" stroke="#303030" stroke-width="0.6"/><path d="M5,4.8 L10,2.2 L10,8.2 L5,11 Z" fill="#c4c4c4" stroke="#303030" stroke-width="0.6"/></g></g><path d="M1.6,13.6 H8.4 M5,10.2 V17.0" stroke="#8c9c7c" stroke-width="2.2" opacity="0.6"/><path d="M0.6000000000000001,12.6 H7.4 M4,9.2 V16.0" stroke="#78e838" stroke-width="2.2"/><path d="M12,11.4 L7.2,19.4" stroke="#202020" stroke-width="1.2"/><path d="M12.0,19.2 H19.6" stroke="#9a9440" stroke-width="2.4"/><path d="M11.2,18.2 H18.8" stroke="#f0ec00" stroke-width="2.4"/></g>
<g transform="translate(707.5,68) scale(1)"><g transform="translate(4.4,2) scale(1)"><ellipse cx="9.5" cy="15.399999999999999" rx="5.5" ry="1.8" fill="#707480" opacity="0.55"/><path d="M0,2.3 V14.099999999999998 A5.5,2.3 0 0 0 11,14.099999999999998 V2.3 A5.5,2.3 0 0 0 0,2.3 Z" fill="url(#iBlue)" stroke="#101828" stroke-width="1.1"/><ellipse cx="5.5" cy="2.3" rx="5.5" ry="2.3" fill="#4c6cc4" stroke="#101828" stroke-width="1.1"/></g><path d="M9.9,7 V17.6" stroke="#101010" stroke-width="1.3" stroke-dasharray="2.2 1.6"/></g>
<g transform="translate(733.5,68) scale(1)"><g transform="translate(4.4,2) scale(1)"><ellipse cx="9.5" cy="15.399999999999999" rx="5.5" ry="1.8" fill="#707480" opacity="0.55"/><path d="M0,2.3 V14.099999999999998 A5.5,2.3 0 0 0 11,14.099999999999998 V2.3 A5.5,2.3 0 0 0 0,2.3 Z" fill="#e8ecf8" stroke="#101828" stroke-width="1.1"/><ellipse cx="5.5" cy="2.3" rx="5.5" ry="2.3" fill="#4c6cc4" stroke="#101828" stroke-width="1.1"/></g><path d="M7.4,6.6 V18.2 M12.4,6.6 V18.2" stroke="#3c5cb4" stroke-width="1.5"/><path d="M9.9,6.8 V18.4" stroke="#f4ec30" stroke-width="1.5"/></g>
<g transform="translate(760,68) scale(1)"><g transform="translate(4,2) scale(1)"><ellipse cx="9.5" cy="15.399999999999999" rx="5.5" ry="1.8" fill="#707480" opacity="0.55"/><path d="M0,2.3 V14.099999999999998 A5.5,2.3 0 0 0 11,14.099999999999998 V2.3 A5.5,2.3 0 0 0 0,2.3 Z" fill="url(#iPale)" stroke="#30e4f0" stroke-width="1.2"/><ellipse cx="5.5" cy="2.3" rx="5.5" ry="2.3" fill="#c8d0e8" stroke="#30e4f0" stroke-width="1.2"/><path d="M0,14.099999999999998 A5.5,2.3 0 0 1 11,14.099999999999998" fill="none" stroke="#30e4f0" stroke-width="0.96" opacity="0.8"/></g><path d="M6.4,11 L9.6,15.6 L16.4,6.2" fill="none" stroke="#3c9c20" stroke-width="3"/><path d="M6.4,10.6 L9.6,15 L16.2,6" fill="none" stroke="#78d838" stroke-width="1.6"/></g>
<g transform="translate(786,68) scale(1)"><ellipse cx="8" cy="17.4" rx="8" ry="1.8" fill="#404040" opacity="0.7"/><g transform="translate(4,3) scale(1)"><path d="M0,2.3 V13.3 A5.5,2.3 0 0 0 11,13.3 V2.3 A5.5,2.3 0 0 0 0,2.3 Z" fill="url(#iPale)" stroke="#30e4f0" stroke-width="1.2"/><ellipse cx="5.5" cy="2.3" rx="5.5" ry="2.3" fill="#d8e0f4" stroke="#30e4f0" stroke-width="1.2"/><path d="M0,13.3 A5.5,2.3 0 0 1 11,13.3" fill="none" stroke="#30e4f0" stroke-width="0.96" opacity="0.8"/></g><rect x="11.4" y="1.6" width="5.4" height="5.4" fill="none" stroke="#c89818" stroke-width="1.2"/><circle cx="13" cy="5.4" r="1.4" fill="none" stroke="#f05818" stroke-width="0.9"/></g>
<g transform="translate(816.5,70) scale(1)"><g transform="translate(0,0) scale(1)"><path d="M0,2.3 V13.7 A5.5,2.3 0 0 0 11,13.7 V2.3 A5.5,2.3 0 0 0 0,2.3 Z" fill="#d0e0f8" stroke="#4c94e8" stroke-width="1.1"/><ellipse cx="5.5" cy="2.3" rx="5.5" ry="2.3" fill="#d0e0f8" stroke="#4c94e8" stroke-width="1.1"/></g><path d="M2.5,3.6 Q4.5,8 2.6,14.6 M5,4.4 Q3.6,9 5.6,15.4 M7.4,4.2 Q9,9.5 7.2,15.2 M9.2,3.6 Q7.8,8 9.4,13.6 M3.4,6 L7.6,12" fill="none" stroke="#4c94e8" stroke-width="0.8"/></g>
<g transform="translate(837,68) scale(1)"><path d="M1.4,5 L9.6,2 L18.4,4.6 L10.2,8.4 Z" fill="#68a4ec" stroke="#101828" stroke-width="1"/><path d="M1.4,5 L10.2,8.4 L10,18.6 L3.4,12.6 Z" fill="#4c7cd0" stroke="#101828" stroke-width="1"/><path d="M10.2,8.4 L18.4,4.6 L16.2,12.4 L10,18.6 Z" fill="#28409c" stroke="#101828" stroke-width="1"/></g>
<g transform="translate(879,68) scale(1)"><path d="M1.6,3.4 H5.6 M3.6,1.4 V5.4 M1.6,7.4 H5.6" stroke="#101010" stroke-width="0.9"/><g transform="translate(11,9.4) scale(0.95)"><path d="M0,2.6 L5,0 L10,2.2 L5,4.8 Z" fill="#a0a0a0" stroke="#303030" stroke-width="0.6"/><path d="M0,2.6 L5,4.8 L5,11 L0,8.4 Z" fill="#8c8c8c" stroke="#303030" stroke-width="0.6"/><path d="M5,4.8 L10,2.2 L10,8.2 L5,11 Z" fill="#c4c4c4" stroke="#303030" stroke-width="0.6"/></g><g transform="translate(0.6,0.4) scale(1)"><path d="M8.4,11.4 L2.2,17.4" stroke="#8c8c8c" stroke-width="3.2" stroke-linecap="round"/><path d="M8.2,11.2 L2.2,17" stroke="#e4e4e4" stroke-width="1.6" stroke-linecap="round"/><circle cx="12" cy="7.6" r="5.2" fill="url(#iLens)" stroke="#90a4c4" stroke-width="1.5"/><circle cx="12" cy="7.6" r="3.6" fill="none" stroke="#6c9cdc" stroke-width="0.8"/></g><path d="M10.6,5 L15,8 L10.6,11 Z" fill="#d4e0f0" stroke="#9cb0d0" stroke-width="0.5"/></g>
<g transform="translate(905,68) scale(1)"><g transform="translate(11,9.4) scale(0.95)"><path d="M0,2.6 L5,0 L10,2.2 L5,4.8 Z" fill="#a0a0a0" stroke="#303030" stroke-width="0.6"/><path d="M0,2.6 L5,4.8 L5,11 L0,8.4 Z" fill="#8c8c8c" stroke="#303030" stroke-width="0.6"/><path d="M5,4.8 L10,2.2 L10,8.2 L5,11 Z" fill="#c4c4c4" stroke="#303030" stroke-width="0.6"/></g><g transform="translate(0.6,0.4) scale(1)"><path d="M8.4,11.4 L2.2,17.4" stroke="#8c8c8c" stroke-width="3.2" stroke-linecap="round"/><path d="M8.2,11.2 L2.2,17" stroke="#e4e4e4" stroke-width="1.6" stroke-linecap="round"/><circle cx="12" cy="7.6" r="5.2" fill="url(#iLens)" stroke="#90a4c4" stroke-width="1.5"/><circle cx="12" cy="7.6" r="3.6" fill="none" stroke="#6c9cdc" stroke-width="0.8"/></g><path d="M10.6,5 L15,8 L10.6,11 Z" fill="#d4e0f0" stroke="#9cb0d0" stroke-width="0.5"/><path d="M0.5999999999999999,1.2 L4.2,4.8 M4.2,1.2 L0.5999999999999999,4.8" stroke="#28b020" stroke-width="1.6"/><rect x="1.2" y="1.8" width="2.4" height="2.4" fill="#48d030"/><path d="M15.599999999999998,1.2 L19.2,4.8 M19.2,1.2 L15.599999999999998,4.8" stroke="#28b020" stroke-width="1.6"/><rect x="16.2" y="1.8" width="2.4" height="2.4" fill="#48d030"/><path d="M0.5999999999999999,14.8 L4.2,18.400000000000002 M4.2,14.8 L0.5999999999999999,18.400000000000002" stroke="#28b020" stroke-width="1.6"/><rect x="1.2" y="15.400000000000002" width="2.4" height="2.4" fill="#48d030"/><path d="M15.599999999999998,14.8 L19.2,18.400000000000002 M19.2,14.8 L15.599999999999998,18.400000000000002" stroke="#28b020" stroke-width="1.6"/><rect x="16.2" y="15.400000000000002" width="2.4" height="2.4" fill="#48d030"/></g>
<g transform="translate(931.5,68) scale(1)"><g transform="translate(0.5,1.2) scale(1.06)"><rect x="3.4" y="3.6" width="11.2" height="10" fill="url(#iPage)" stroke="#686868" stroke-width="1.1"/><path d="M0.20000000000000018,0.20000000000000018 L4.2,4.2 M4.2,0.20000000000000018 L0.20000000000000018,4.2" stroke="#28b020" stroke-width="1.7"/><rect x="0.9000000000000001" y="0.9000000000000001" width="2.6" height="2.6" fill="#48d030"/><path d="M13.8,0.20000000000000018 L17.8,4.2 M17.8,0.20000000000000018 L13.8,4.2" stroke="#28b020" stroke-width="1.7"/><rect x="14.5" y="0.9000000000000001" width="2.6" height="2.6" fill="#48d030"/><path d="M0.20000000000000018,13.2 L4.2,17.2 M4.2,13.2 L0.20000000000000018,17.2" stroke="#28b020" stroke-width="1.7"/><rect x="0.9000000000000001" y="13.899999999999999" width="2.6" height="2.6" fill="#48d030"/><path d="M13.8,13.2 L17.8,17.2 M17.8,13.2 L13.8,17.2" stroke="#28b020" stroke-width="1.7"/><rect x="14.5" y="13.899999999999999" width="2.6" height="2.6" fill="#48d030"/></g><text x="5.6" y="14" font-family="'Liberation Sans',sans-serif" font-size="7" font-weight="bold" fill="#201870">1:1</text></g>
<g transform="translate(957.5,68) scale(1)"><path d="M4.6,15 L14.4,5" stroke="#208c18" stroke-width="2.6"/><path d="M4.6,15 L14.4,5" stroke="#60d848" stroke-width="1.2"/><path d="M10.4,3.2 L18,1.6 L16.4,9 Z" fill="#48c838" stroke="#208c18" stroke-width="0.7"/><circle cx="3.8" cy="15.6" r="3" fill="#d8d8d8" stroke="#404040" stroke-width="0.8"/><circle cx="3" cy="14.8" r="1" fill="#fff"/></g>
<g transform="translate(983.5,68) scale(1)"><path d="M3.4,11 A6.6,8 0 0 1 13.6,3.6 L14,1 L18,6 L12,8 L12.6,5.4 A4.4,5.6 0 0 0 6.4,11 Z" fill="#48c030" stroke="#20881c" stroke-width="0.7"/><path d="M16.6,9 A6.6,8 0 0 1 6.4,16.4 L6,19 L2,14 L8,12 L7.4,14.6 A4.4,5.6 0 0 0 13.6,9 Z" fill="#48c030" stroke="#20881c" stroke-width="0.7"/></g>
<g transform="translate(1009,68) scale(1)"><g transform="translate(0.4,1.2) scale(0.97)"><path d="M0.4,8.4 Q5,2.4 11,1.8 Q16.4,2 19.8,6.4 Q16,9.4 10,9.8 Q4,9.8 0.4,8.4 Z" fill="#a4acd8"/><path d="M2,8 Q6,3.4 11,3 Q15,3.2 18,6 Q14,8.6 10,8.8 Q5,8.8 2,8 Z" fill="#c4c8ec"/><ellipse cx="9.4" cy="5.8" rx="4.9" ry="3.9" fill="#42588c"/><ellipse cx="9.4" cy="5.8" rx="2.4" ry="2.3" fill="#182444"/><circle cx="10.8" cy="4.4" r="0.9" fill="#dce8ff"/><path d="M0.2,8.6 Q5,2.2 11,1.6 Q16.6,1.8 20,6.6" fill="none" stroke="#20243c" stroke-width="1.9"/><path d="M3.6,3.6 L2.6,1.8 M6,2.2 L5.2,0.2 M8.6,1.2 L8.4,-0.8 M11.6,1 L12.2,-0.8 M14.4,1.6 L15.8,0 M16.8,2.8 L18.6,1.4 M18.6,4.6 L20.4,3.4" stroke="#20243c" stroke-width="1"/><path d="M0.6,8.8 Q5,10.6 10,10.2 Q15,9.6 18,7.6" fill="none" stroke="#a87890" stroke-width="0.7"/></g><circle cx="9.6" cy="14.2" r="6" fill="url(#iSmile)" stroke="#c89010" stroke-width="0.5"/><ellipse cx="7.6" cy="12.4" rx="0.8" ry="1.4" fill="#282010"/><ellipse cx="11.4" cy="12.4" rx="0.8" ry="1.4" fill="#282010"/><path d="M6.4,15.6 Q9.6,18.6 12.8,15.6" fill="none" stroke="#583808" stroke-width="0.8"/></g>
<g transform="translate(1052.5,68.4) scale(1)"><path d="M0.4,8.6 L10,2.4 L19.6,6.8 L19.6,12.4 L10.4,18.6 L0.4,13.6 Z" fill="#dce6f8" stroke="#b4c0d8" stroke-width="0.6"/><path d="M5.4,11 V3" stroke="#1c6cf0" stroke-width="1.8"/><path d="M2.6,4.4 L5.4,0 L8.2,4.4 Z" fill="#1c6cf0"/><path d="M5.4,11 L12.8,6.4" stroke="#30b028" stroke-width="1.8"/><path d="M10.8,4.4 L15.4,4.8 L13.2,8.6 Z" fill="#30b028"/><path d="M5.4,11 L11.4,15.4" stroke="#e01818" stroke-width="1.8"/><path d="M9.4,16.6 L13.8,17 L11.8,13.2 Z" fill="#e01818"/><circle cx="5.4" cy="11" r="1.9" fill="#f0f0f0" stroke="#505050" stroke-width="0.7"/></g>
<g transform="translate(1078.5,68) scale(1)"><path d="M6,3.8 L13,1.2 L19,4.8 L12,8 Z" fill="#d8e4f8" stroke="#a8b4cc" stroke-width="0.5"/><path d="M10.4,6 V0.6" stroke="#1c6cf0" stroke-width="1.2"/><path d="M10.4,6 L13.4,3.6" stroke="#30b028" stroke-width="1.2"/><path d="M10.4,6 L13.4,8.2" stroke="#e01818" stroke-width="1.2"/><rect x="10.4" y="13.4" width="8.4" height="4.6" rx="1" fill="#e0e0e0" stroke="#a0a0a0" stroke-width="1"/><circle cx="3.8" cy="16.4" r="2.6" fill="#e8e8e8" stroke="#a0a0a0" stroke-width="1"/><path d="M2.4,15.6 L8.6,9.8" stroke="#209018" stroke-width="3"/><path d="M5.4,7 L12.6,6 L11,13 Z" fill="#38b828" stroke="#209018" stroke-width="0.6"/></g>
<g transform="translate(1104,68) scale(1)"><path d="M7,4.6 L13,2.2 L18.6,5.4 L12,8.6 Z" fill="#e4ecf8" stroke="#a8b4cc" stroke-width="0.5"/><path d="M11.6,6 V0.4" stroke="#1c6cf0" stroke-width="1.2"/><path d="M10,1.8 L11.6,-0.4 L13.2,1.8Z" fill="#1c6cf0"/><path d="M11.6,6 L15,3.6" stroke="#30b028" stroke-width="1.3"/><path d="M11.6,6 L14.6,8.2" stroke="#e01818" stroke-width="1.3"/><path d="M0.6,10.4 L5.4,5.2 L6,7.4 L11,11.6 L9,14 L4.4,10.4 Z M1.6,12.6 L6,16.4 L7.6,14.6 L9.2,19.6 L3.4,19.6 L4.4,17.8 L0.8,14.6 Z" fill="#38b828" stroke="#188018" stroke-width="0.6"/></g>
<g transform="translate(1147,68) scale(1)"><rect x="0.4" y="1" width="19.2" height="18" fill="#a8b0c4"/><rect x="0.8" y="1.4" width="5.7" height="5.3" fill="#00e0f8"/><rect x="7.1" y="1.4" width="5.7" height="5.3" fill="#f8e000"/><rect x="13.4" y="1.4" width="5.7" height="5.3" fill="#00f000"/><rect x="0.8" y="7.3" width="5.7" height="5.3" fill="#f88800"/><rect x="7.1" y="7.3" width="5.7" height="5.3" fill="#a06000"/><rect x="13.4" y="7.3" width="5.7" height="5.3" fill="#f800e8"/><rect x="0.8" y="13.2" width="5.7" height="5.3" fill="#0000f8"/><rect x="7.1" y="13.2" width="5.7" height="5.3" fill="#00a830"/><rect x="13.4" y="13.2" width="5.7" height="5.3" fill="#808080"/></g>
<g transform="translate(1173,68) scale(1)"><rect x="2.2" y="0.4" width="15.4" height="18.8" fill="#dce8fc" stroke="#8890a0" stroke-width="1"/><rect x="3.6" y="1.8" width="12.6" height="1.6" fill="#4c8ce8"/><path d="M4.4,5.4 H7.6 M12,5.4 H15.4" stroke="#f8b020" stroke-width="0.9"/><path d="M4.4,7.6 H15.4" stroke="#88e860" stroke-width="1.2"/><rect x="5.2" y="9.6" width="2.6" height="2.2" fill="#00e0f8"/><rect x="8.6" y="9.6" width="2.6" height="2.2" fill="#f8e000"/><rect x="12" y="9.6" width="2.6" height="2.2" fill="#00f000"/><rect x="5.2" y="12.5" width="2.6" height="2.2" fill="#f88800"/><rect x="8.6" y="12.5" width="2.6" height="2.2" fill="#a06000"/><rect x="12" y="12.5" width="2.6" height="2.2" fill="#f800e8"/><rect x="5.2" y="15.4" width="2.6" height="2.2" fill="#0000f8"/><rect x="8.6" y="15.4" width="2.6" height="2.2" fill="#00a830"/><rect x="12" y="15.4" width="2.6" height="2.2" fill="#808080"/></g>
<g transform="translate(1199,68) scale(1)"><circle cx="10" cy="10" r="9.4" fill="#68a040" stroke="#88887c" stroke-width="1"/><path d="M7.4,15 Q7,11 10.4,10.6 Q13,11 12.8,15 Q10,16.6 7.4,15 Z" fill="#c8c8b8" stroke="#808070" stroke-width="0.5"/><g transform="translate(1.6,1.2) scale(1)"><path d="M3,15.4 L11,6.6" stroke="#3c78d0" stroke-width="2.6" stroke-linecap="round"/><path d="M14.6,15.4 L5.2,5.4" stroke="#707070" stroke-width="3" stroke-linecap="round"/><path d="M14.6,15.4 L5.2,5.4" stroke="#e8e8e8" stroke-width="1.8" stroke-linecap="round"/><path d="M2.6,2.4 A3.2,3.2 0 1 0 7.4,4.6" fill="none" stroke="#e8e8e8" stroke-width="2.2"/><path d="M11,6.6 L14.4,2.4" stroke="#d8d8d8" stroke-width="1.6" stroke-linecap="round"/></g></g>
<g transform="translate(1225,68) scale(1)"><rect x="0.6" y="0.6" width="18.8" height="18.4" fill="#c4d8f8" stroke="#505868" stroke-width="1"/><rect x="1.2" y="1.2" width="17.6" height="3" fill="#3c74d0"/><rect x="4.4" y="5.6" width="2.2" height="2" fill="#a8b820"/><rect x="7.6" y="5.6" width="2.2" height="2" fill="#a8b820"/><rect x="10.8" y="5.6" width="2.2" height="2" fill="#a8b820"/><rect x="14" y="5.6" width="2.2" height="2" fill="#a8b820"/><rect x="2" y="8.4" width="1.8" height="1.8" fill="#b06818"/><rect x="2" y="11.2" width="1.8" height="1.8" fill="#b06818"/><rect x="2" y="14" width="1.8" height="1.8" fill="#b06818"/><rect x="2" y="16.8" width="1.8" height="1.8" fill="#b06818"/><g transform="translate(6.4,6.4) scale(0.7)"><path d="M3,15.4 L11,6.6" stroke="#4c84d8" stroke-width="2.6" stroke-linecap="round"/><path d="M14.6,15.4 L5.2,5.4" stroke="#707070" stroke-width="3" stroke-linecap="round"/><path d="M14.6,15.4 L5.2,5.4" stroke="#d0d8e8" stroke-width="1.8" stroke-linecap="round"/><path d="M2.6,2.4 A3.2,3.2 0 1 0 7.4,4.6" fill="none" stroke="#d0d8e8" stroke-width="2.2"/><path d="M11,6.6 L14.4,2.4" stroke="#d8d8d8" stroke-width="1.6" stroke-linecap="round"/></g></g>
<g transform="translate(1251.5,68) scale(1)"><path d="M1.6,0.30000000000000004 L2.9000000000000004,1.6 L1.6,2.9000000000000004 L0.30000000000000004,1.6 Z" fill="#184088"/><path d="M5.6,0.30000000000000004 L6.8999999999999995,1.6 L5.6,2.9000000000000004 L4.3,1.6 Z" fill="#184088"/><path d="M9.6,0.30000000000000004 L10.9,1.6 L9.6,2.9000000000000004 L8.299999999999999,1.6 Z" fill="#184088"/><path d="M13.6,0.30000000000000004 L14.9,1.6 L13.6,2.9000000000000004 L12.299999999999999,1.6 Z" fill="#184088"/><path d="M17.6,0.30000000000000004 L18.900000000000002,1.6 L17.6,2.9000000000000004 L16.3,1.6 Z" fill="#184088"/><path d="M1.6,4.3 L2.9000000000000004,5.6 L1.6,6.8999999999999995 L0.30000000000000004,5.6 Z" fill="#184088"/><path d="M1.6,8.299999999999999 L2.9000000000000004,9.6 L1.6,10.9 L0.30000000000000004,9.6 Z" fill="#184088"/><path d="M1.6,12.299999999999999 L2.9000000000000004,13.6 L1.6,14.9 L0.30000000000000004,13.6 Z" fill="#184088"/><path d="M1.6,16.3 L2.9000000000000004,17.6 L1.6,18.900000000000002 L0.30000000000000004,17.6 Z" fill="#184088"/><path d="M5.6,16.3 L6.8999999999999995,17.6 L5.6,18.900000000000002 L4.3,17.6 Z" fill="#184088"/><path d="M9.6,16.3 L10.9,17.6 L9.6,18.900000000000002 L8.299999999999999,17.6 Z" fill="#184088"/><path d="M13.6,16.3 L14.9,17.6 L13.6,18.900000000000002 L12.299999999999999,17.6 Z" fill="#184088"/><path d="M17.6,16.3 L18.900000000000002,17.6 L17.6,18.900000000000002 L16.3,17.6 Z" fill="#184088"/><path d="M17.6,12.299999999999999 L18.900000000000002,13.6 L17.6,14.9 L16.3,13.6 Z" fill="#184088"/><path d="M17.6,8.299999999999999 L18.900000000000002,9.6 L17.6,10.9 L16.3,9.6 Z" fill="#184088"/><path d="M17.6,4.3 L18.900000000000002,5.6 L17.6,6.8999999999999995 L16.3,5.6 Z" fill="#184088"/><path d="M4.6,9.8 L9,4.6 Q12,2 18.6,3.6 L18.6,8.6 Q14.6,8.2 13.6,10.4 L9.6,11.6 L10.4,8.6 L6.6,12 Z" fill="#e8b060" stroke="#a06c20" stroke-width="0.6"/><circle cx="6.4" cy="13.6" r="3" fill="#f0e838" stroke="#b0a010" stroke-width="0.5"/><path d="M4.4,13.6 H8.4 M6.4,11.6 V15.6" stroke="#2858e0" stroke-width="1.1"/></g>
<g transform="translate(1278.5,68) scale(1)"><path d="M5.6,2.6 L19.4,1 L15.6,16 L0.6,17.6 Z" fill="#e87880" stroke="#2c58d0" stroke-width="1.3"/><path d="M4.2,6.4 L18.4,4.8 M3,10.2 L17.4,8.6 M1.8,14 L16.4,12.4 M9,2.2 L4.6,17.2 M12.6,1.8 L8.4,16.8 M16,1.4 L12,16.4" stroke="#f8e8e8" stroke-width="0.8"/><path d="M9,10 L16,9.2 L15,14.6 L7.6,15.4 Z" fill="#705058" opacity="0.55"/><path d="M0.6,17.6 L15.6,16 L16.6,17.2 L1.6,18.8 Z" fill="#1c3c98"/></g>
<g transform="translate(7,133.6) scale(1)"><circle cx="8" cy="7" r="5" fill="#dfe8f4" stroke="#b4bccc" stroke-width="1" opacity="0.9"/><circle cx="9.5" cy="7.4" r="5" fill="#dfe8f4" stroke="#a8b4c8" stroke-width="1" opacity="0.9"/><path d="M8.4,11.4 L2.2,17.4" stroke="#8c8c8c" stroke-width="3.2" stroke-linecap="round"/><path d="M8.2,11.2 L2.2,17" stroke="#e4e4e4" stroke-width="1.6" stroke-linecap="round"/><circle cx="12" cy="7.6" r="5.2" fill="url(#iLens)" stroke="#90a4c4" stroke-width="1.5"/><circle cx="12" cy="7.6" r="3.6" fill="none" stroke="#6c9cdc" stroke-width="0.8"/></g>
<g transform="translate(34,133.6) scale(1)"><path d="M3,3.6 L7,7.6 M8.6,9.2 L12,12.6 M13.4,14 L17,17.6" stroke="#2868e0" stroke-width="1.3"/><path d="M5,1.2 L9.4,5.6 M11,7.2 L15,11.2 M16.4,12.6 L18.6,14.8" stroke="#2868e0" stroke-width="1.3"/></g><g transform="translate(34,133.6) scale(1)"><path d="M14.4,1.6 L17,4 L6.4,15.2 L3.6,12.8 Z" fill="#e8a030" stroke="#8c5410" stroke-width="0.6"/><path d="M15.4,0.6 L18,3 L17,4 L14.4,1.6 Z" fill="#e02828"/><path d="M3.6,12.8 L6.4,15.2 L2.2,17 Z" fill="#f4dcb0" stroke="#8c5410" stroke-width="0.5"/><path d="M2.2,17 L3.4,15.4 L4,16.2 Z" fill="#202020"/><ellipse cx="6.5" cy="17.4" rx="6" ry="1.2" fill="#70788c" opacity="0.5"/></g><path d="M47.5,133.1 h5 l-2.5,2.6 z" fill="#000"/>
<g transform="translate(7.4,159.8) scale(1.06)"><rect x="3.4" y="3.6" width="11.2" height="10" fill="url(#iPage)" stroke="#686868" stroke-width="1.1"/><path d="M0.20000000000000018,0.20000000000000018 L4.2,4.2 M4.2,0.20000000000000018 L0.20000000000000018,4.2" stroke="#28b020" stroke-width="1.7"/><rect x="0.9000000000000001" y="0.9000000000000001" width="2.6" height="2.6" fill="#48d030"/><path d="M13.8,0.20000000000000018 L17.8,4.2 M17.8,0.20000000000000018 L13.8,4.2" stroke="#28b020" stroke-width="1.7"/><rect x="14.5" y="0.9000000000000001" width="2.6" height="2.6" fill="#48d030"/><path d="M0.20000000000000018,13.2 L4.2,17.2 M4.2,13.2 L0.20000000000000018,17.2" stroke="#28b020" stroke-width="1.7"/><rect x="0.9000000000000001" y="13.899999999999999" width="2.6" height="2.6" fill="#48d030"/><path d="M13.8,13.2 L17.8,17.2 M17.8,13.2 L13.8,17.2" stroke="#28b020" stroke-width="1.7"/><rect x="14.5" y="13.899999999999999" width="2.6" height="2.6" fill="#48d030"/></g>
<g transform="translate(34,159.4) scale(1)"><path d="M9,5 Q4,0 1.6,4 Q0,8.4 6.4,11.6 Q13,15 15.6,16.6 Q19.6,14 17,10.4 Q15,8.4 12.4,9.6" fill="none" stroke="#2868e0" stroke-width="1.5"/></g><g transform="translate(34,159.4) scale(1)"><path d="M14.4,1.6 L17,4 L6.4,15.2 L3.6,12.8 Z" fill="#e8a030" stroke="#8c5410" stroke-width="0.6"/><path d="M15.4,0.6 L18,3 L17,4 L14.4,1.6 Z" fill="#e02828"/><path d="M3.6,12.8 L6.4,15.2 L2.2,17 Z" fill="#f4dcb0" stroke="#8c5410" stroke-width="0.5"/><path d="M2.2,17 L3.4,15.4 L4,16.2 Z" fill="#202020"/><ellipse cx="6.5" cy="17.4" rx="6" ry="1.2" fill="#70788c" opacity="0.5"/></g><path d="M47.5,158.9 h5 l-2.5,2.6 z" fill="#000"/>
<g transform="translate(7,185.8) scale(1)"><path d="M1.2,2.8 H5.2 M3.2,0.8 V4.8 M1.2,6.6 H5.2" stroke="#101010" stroke-width="0.9"/><g transform="translate(11,9.6) scale(0.95)"><path d="M0,2.6 L5,0 L10,2.2 L5,4.8 Z" fill="#a0a0a0" stroke="#303030" stroke-width="0.6"/><path d="M0,2.6 L5,4.8 L5,11 L0,8.4 Z" fill="#8c8c8c" stroke="#303030" stroke-width="0.6"/><path d="M5,4.8 L10,2.2 L10,8.2 L5,11 Z" fill="#c4c4c4" stroke="#303030" stroke-width="0.6"/></g><g transform="translate(0.4,0.6) scale(1)"><path d="M8.4,11.4 L2.2,17.4" stroke="#8c8c8c" stroke-width="3.2" stroke-linecap="round"/><path d="M8.2,11.2 L2.2,17" stroke="#e4e4e4" stroke-width="1.6" stroke-linecap="round"/><circle cx="12" cy="7.6" r="5.2" fill="url(#iLens)" stroke="#90a4c4" stroke-width="1.5"/><circle cx="12" cy="7.6" r="3.6" fill="none" stroke="#6c9cdc" stroke-width="0.8"/></g><path d="M10.4,5.2 L14.8,8.2 L10.4,11.2 Z" fill="#d4e0f0" stroke="#9cb0d0" stroke-width="0.5"/></g><path d="M21,185.8 h5 l-2.5,2.6 z" fill="#000"/>
<g transform="translate(34,185.8) scale(1)"><path d="M2.6,1.6 H15.4 V10.4 H13 V17.4 H2.6 Z" fill="none" stroke="#f0e800" stroke-width="1.9"/><path d="M13,10.4 H15.4" stroke="#f0e800" stroke-width="1.9"/><path d="M5.2,9.4 L8.4,14 L15.4,5" fill="none" stroke="#30a020" stroke-width="3.2"/><path d="M5.2,9 L8.4,13.4 L15.2,4.8" fill="none" stroke="#70d840" stroke-width="1.6"/></g><path d="M47.5,185.8 h5 l-2.5,2.6 z" fill="#000"/>
<g transform="translate(7,212) scale(1)"><path d="M0.4,8.6 L10,2.4 L19.6,6.8 L19.6,12.4 L10.4,18.6 L0.4,13.6 Z" fill="#dce6f8" stroke="#b4c0d8" stroke-width="0.6"/><path d="M5.4,11 V3" stroke="#1c6cf0" stroke-width="1.8"/><path d="M2.6,4.4 L5.4,0 L8.2,4.4 Z" fill="#1c6cf0"/><path d="M5.4,11 L12.8,6.4" stroke="#30b028" stroke-width="1.8"/><path d="M10.8,4.4 L15.4,4.8 L13.2,8.6 Z" fill="#30b028"/><path d="M5.4,11 L11.4,15.4" stroke="#e01818" stroke-width="1.8"/><path d="M9.4,16.6 L13.8,17 L11.8,13.2 Z" fill="#e01818"/><circle cx="5.4" cy="11" r="1.9" fill="#f0f0f0" stroke="#505050" stroke-width="0.7"/></g><path d="M21,211.1 h5 l-2.5,2.6 z" fill="#000"/>
<g transform="translate(34,211.6) scale(1)"><path d="M1.4,12 Q2.4,0 6.4,3.4 Q10,8 12,14.4 Q15,20 18,13" fill="none" stroke="#2868e0" stroke-width="1.5"/></g><g transform="translate(34,211.6) scale(1)"><path d="M14.4,1.6 L17,4 L6.4,15.2 L3.6,12.8 Z" fill="#e8a030" stroke="#8c5410" stroke-width="0.6"/><path d="M15.4,0.6 L18,3 L17,4 L14.4,1.6 Z" fill="#e02828"/><path d="M3.6,12.8 L6.4,15.2 L2.2,17 Z" fill="#f4dcb0" stroke="#8c5410" stroke-width="0.5"/><path d="M2.2,17 L3.4,15.4 L4,16.2 Z" fill="#202020"/><ellipse cx="6.5" cy="17.4" rx="6" ry="1.2" fill="#70788c" opacity="0.5"/></g><path d="M47.5,211.1 h5 l-2.5,2.6 z" fill="#000"/>
<g transform="translate(7,237.8) scale(1)"><path d="M1,3.2 L8,1.6 L13,3.4 L6,5 Z" fill="#6878f0" stroke="#4050c0" stroke-width="0.4"/><path d="M1,5.8 L6,7.6 L13,6 L13,4.4 L6,6 L1,4.2 Z" fill="#f4f4f8" stroke="#909090" stroke-width="0.4"/><path d="M1,8.4 L6,10.2 L13,8.6 L13,7 L6,8.6 L1,6.8 Z" fill="#d8d8e0" stroke="#808080" stroke-width="0.4"/><ellipse cx="11.6" cy="14.6" rx="7" ry="4.2" fill="#c89880" stroke="#7c5038" stroke-width="0.6" transform="rotate(-8 11.6 14.6)"/><circle cx="8.2" cy="16.2" r="1.7" fill="#1848f0"/><circle cx="12.8" cy="15.8" r="1.7" fill="#18a828"/><circle cx="14.6" cy="12.2" r="1.6" fill="#e01818"/><path d="M18.6,1.2 L12.4,11" stroke="#b05818" stroke-width="1.5"/></g><path d="M21,237.3 h5 l-2.5,2.6 z" fill="#000"/>
<g transform="translate(34,237.8) scale(1)"><path d="M5.6,2.6 L19.4,1 L15.6,15.4 L0.6,17 Z" fill="#a8c8f8" stroke="#2c60d8" stroke-width="1.4"/><path d="M3.4,9.6 L17.6,8 M10.6,2 L6.6,16.4" stroke="#e8f0ff" stroke-width="1.2"/><path d="M0.6,17 L15.6,15.4 L16.4,16.8 L1.4,18.4 Z" fill="#1c3c98"/></g><path d="M47.5,237.3 h5 l-2.5,2.6 z" fill="#000"/>
<g transform="translate(7,263.8) scale(1)"><g transform="translate(1.2,2.4) scale(1.02)"><path d="M1,8 A7,6 0 0 1 13,3.6 L12.4,0.6 L17,5.6 L11,8.4 L11.6,5.6 A4.6,3.6 0 0 0 4.6,8 Z" fill="#5c98e0" stroke="#3c70c0" stroke-width="0.5"/><path d="M16.4,8.6 A7,6 0 0 1 4.6,13.6 L5.4,16.4 L0.4,11.6 L6.4,8.8 L5.8,11.4 A4.6,3.6 0 0 0 12.8,8.6 Z" fill="#5c98e0" stroke="#3c70c0" stroke-width="0.5"/></g></g><path d="M21,263.3 h5 l-2.5,2.6 z" fill="#000"/>
<g transform="translate(34,263.8) scale(1)"><ellipse cx="10" cy="17.6" rx="8" ry="1.6" fill="#606878" opacity="0.5"/><g transform="translate(1.6,1.6) scale(1.62)"><path d="M0,2.6 L5,0 L10,2.2 L5,4.8 Z" fill="#f4f4f4" stroke="#303030" stroke-width="0.6"/><path d="M0,2.6 L5,4.8 L5,11 L0,8.4 Z" fill="#8c8c8c" stroke="#303030" stroke-width="0.6"/><path d="M5,4.8 L10,2.2 L10,8.2 L5,11 Z" fill="#c4c4c4" stroke="#303030" stroke-width="0.6"/></g></g><path d="M47.5,263.3 h5 l-2.5,2.6 z" fill="#000"/>
<g transform="translate(7,289.4) scale(1)"><ellipse cx="10" cy="18" rx="5" ry="1.2" fill="#606878" opacity="0.5"/><text x="3.6" y="16.4" font-family="'Liberation Sans',sans-serif" font-size="20" font-weight="bold" fill="#3868d0" stroke="#1c3c98" stroke-width="0.4">?</text></g><path d="M21,288.9 h5 l-2.5,2.6 z" fill="#000"/>
<g transform="translate(34,289.4) scale(1)"><path d="M1.6,4 V18.6 M18,4 V18.6" stroke="#181818" stroke-width="1.2"/><path d="M3,7 H17" stroke="#181818" stroke-width="1"/><path d="M1.8,7 L5.6,5 V9 Z M18,7 L14.2,5 V9 Z" fill="#e8e000" stroke="#181818" stroke-width="0.5"/></g><path d="M47.5,288.9 h5 l-2.5,2.6 z" fill="#000"/>
<g transform="translate(7,315.4) scale(1)"><path d="M3.6,6 L5.4,18 Q10,19.6 14.6,18 L16.4,6 Z" fill="#b8d4f0" stroke="#5078a8" stroke-width="0.8"/><ellipse cx="10" cy="6" rx="6.6" ry="1.9" fill="#88a8d0" stroke="#5078a8" stroke-width="0.8"/><path d="M7,9 L8,16 M10,9.4 V16.6 M13,9 L12,16" stroke="#e8f4ff" stroke-width="0.9"/><path d="M7,4.4 L8.4,1.6 L10.6,3.4 L12.6,1.4 L13.4,4.6" fill="#e8e038" stroke="#888018" stroke-width="0.5"/></g><path d="M21,314.9 h5 l-2.5,2.6 z" fill="#000"/>
<g transform="translate(36,316.8) scale(1)"><ellipse cx="8.5" cy="16" rx="8" ry="1.6" fill="#888" opacity="0.35"/><path d="M0.4,6.2 L7.6,0.4 L7.6,4 Q15,4.4 15,11 Q14.6,15.4 10,16.4 Q12,13.6 10.6,11 Q9.6,9.2 7.6,9.2 L7.6,12.6 Z" fill="url(#iGray)" stroke="#9c9c9c" stroke-width="0.6"/></g><path d="M47.5,314.9 h5 l-2.5,2.6 z" fill="#000"/>
<g transform="translate(7,341.4) scale(1)"><path d="M2,1 V19 M4.4,1 V19" stroke="#303030" stroke-width="1.2"/><path d="M0.6,17 L12,13 L19,15.4 L7.4,19.6 Z" fill="#f88818" stroke="#c05c08" stroke-width="0.5"/><circle cx="12" cy="9.6" r="5.2" fill="none" stroke="#e87818" stroke-width="1.6"/><path d="M12,2.6 V16.6 M5,9.6 H19 M7,4.6 L17,14.6 M17,4.6 L7,14.6" stroke="#e87818" stroke-width="1"/><circle cx="12" cy="9.6" r="1.6" fill="#f8c060"/></g><path d="M21,340.9 h5 l-2.5,2.6 z" fill="#000"/>
<g transform="translate(34,341.4) scale(1)"><path d="M7,8 H19.4 V19.4 H7 Z" fill="#f8f8f8" stroke="#181818" stroke-width="1"/><g transform="translate(0.4,0.6) scale(1.05)"><path d="M0.5,3 L5.4,1.6 L7,3.4 L12.6,2.4 L12.6,13.4 L0.8,16 Z" fill="#f4d070" stroke="#c49828" stroke-width="0.7"/><path d="M0.8,16 L3.6,7.6 L16,5.4 L12.8,13.4 Z" fill="url(#iFold)" stroke="#c49828" stroke-width="0.7"/></g><path d="M8,4.6 Q10,1.4 14.6,2.4 L14.2,1 L18.6,4 L14.8,7.4 L14.8,5.8 Q11.6,5 10,7 Z" fill="url(#iGreenA)" stroke="#187818" stroke-width="0.4"/></g>
<rect x="64" y="113" width="24" height="24" fill="#7e859c"/>
<rect x="92" y="113" width="24" height="24" fill="#7e859c"/>
<rect x="120" y="113" width="24" height="24" fill="#7e859c"/>
<rect x="148" y="113" width="24" height="24" fill="#7e859c"/>
<rect x="176" y="113" width="24" height="24" fill="#7e859c"/>
<rect x="204" y="113" width="24" height="24" fill="#7e859c"/>
<rect x="232" y="113" width="24" height="24" fill="#7e859c"/>
<rect x="260" y="113" width="24" height="24" fill="#7e859c"/>
<rect x="288" y="113" width="24" height="24" fill="#7e859c"/>
<rect x="316" y="113" width="24" height="24" fill="#7e859c"/>
<rect x="344" y="113" width="24" height="24" fill="#7e859c"/>
<rect x="67.5" y="117.2" width="17" height="3.4" fill="#46608c" stroke="#32486c" stroke-width="0.5"/><rect x="67.5" y="123.2" width="17" height="3.4" fill="#46608c" stroke="#32486c" stroke-width="0.5"/><rect x="67.5" y="129.2" width="17" height="3.4" fill="#46608c" stroke="#32486c" stroke-width="0.5"/>
<g transform="translate(94.6,115.8) scale(1.04)"><rect x="3.4" y="3.6" width="11.2" height="10" fill="url(#iPage)" stroke="#686868" stroke-width="1.1"/><path d="M0.20000000000000018,0.20000000000000018 L4.2,4.2 M4.2,0.20000000000000018 L0.20000000000000018,4.2" stroke="#28b020" stroke-width="1.7"/><rect x="0.9000000000000001" y="0.9000000000000001" width="2.6" height="2.6" fill="#48d030"/><path d="M13.8,0.20000000000000018 L17.8,4.2 M17.8,0.20000000000000018 L13.8,4.2" stroke="#28b020" stroke-width="1.7"/><rect x="14.5" y="0.9000000000000001" width="2.6" height="2.6" fill="#48d030"/><path d="M0.20000000000000018,13.2 L4.2,17.2 M4.2,13.2 L0.20000000000000018,17.2" stroke="#28b020" stroke-width="1.7"/><rect x="0.9000000000000001" y="13.899999999999999" width="2.6" height="2.6" fill="#48d030"/><path d="M13.8,13.2 L17.8,17.2 M17.8,13.2 L13.8,17.2" stroke="#28b020" stroke-width="1.7"/><rect x="14.5" y="13.899999999999999" width="2.6" height="2.6" fill="#48d030"/></g>
<g transform="translate(122.4,115.6) scale(1)"><circle cx="8" cy="7" r="5" fill="#dfe8f4" stroke="#b4bccc" stroke-width="1" opacity="0.9"/><circle cx="9.5" cy="7.4" r="5" fill="#dfe8f4" stroke="#a8b4c8" stroke-width="1" opacity="0.9"/><path d="M8.4,11.4 L2.2,17.4" stroke="#8c8c8c" stroke-width="3.2" stroke-linecap="round"/><path d="M8.2,11.2 L2.2,17" stroke="#e4e4e4" stroke-width="1.6" stroke-linecap="round"/><circle cx="12" cy="7.6" r="5.2" fill="url(#iLens)" stroke="#90a4c4" stroke-width="1.5"/><circle cx="12" cy="7.6" r="3.6" fill="none" stroke="#6c9cdc" stroke-width="0.8"/></g>
<path d="M150,128 L160,122 L170,127 L159,134.6 Z" fill="none" stroke="#606060" stroke-width="0.6"/>
<g transform="translate(153.6,115.6) scale(1)"><path d="M5.4,11 V3" stroke="#1c6cf0" stroke-width="1.8"/><path d="M2.6,4.4 L5.4,0 L8.2,4.4 Z" fill="#1c6cf0"/><path d="M5.4,11 L12.8,6.4" stroke="#30b028" stroke-width="1.8"/><path d="M10.8,4.4 L15.4,4.8 L13.2,8.6 Z" fill="#30b028"/><path d="M5.4,11 L11.4,15.4" stroke="#e01818" stroke-width="1.8"/><path d="M9.4,16.6 L13.8,17 L11.8,13.2 Z" fill="#e01818"/><circle cx="5.4" cy="11" r="1.9" fill="#f0f0f0" stroke="#505050" stroke-width="0.7"/></g>
<path d="M188.5,116.1 L179.1,119.7 M188.5,116.1 L197.7,119.7 M179.1,119.7 L188.5,123.6 M197.7,119.7 L188.5,123.6 M179.1,119.7 L179.1,129.9 M197.7,119.7 L197.7,129.9 M188.5,123.6 L188.5,134.6 M179.1,129.9 L188.5,134.6 M197.7,129.9 L188.5,134.6 M188.5,116.1 L188.5,125.7 M188.5,125.7 L179.1,129.9 M188.5,125.7 L197.7,129.9" stroke="#080808" stroke-width="1.1" fill="none" stroke-linecap="round"/><polygon points="188.5,116.1 197.7,119.7 188.5,123.6 179.1,119.7" fill="url(#iCubeT)" stroke="#0c7c0c" stroke-width="0.6"/>
<polygon points="216.5,125.7 225.7,129.9 216.5,134.6 207.1,129.9" fill="url(#iCubeT)" stroke="#0c7c0c" stroke-width="0.6"/><path d="M216.5,116.1 L207.1,119.7 M216.5,116.1 L225.7,119.7 M207.1,119.7 L216.5,123.6 M225.7,119.7 L216.5,123.6 M207.1,119.7 L207.1,129.9 M225.7,119.7 L225.7,129.9 M216.5,123.6 L216.5,134.6 M207.1,129.9 L216.5,134.6 M225.7,129.9 L216.5,134.6 M216.5,116.1 L216.5,125.7 M216.5,125.7 L207.1,129.9 M216.5,125.7 L225.7,129.9" stroke="#080808" stroke-width="1.1" fill="none" stroke-linecap="round"/>
<polygon points="244.5,116.1 235.1,119.7 235.1,129.9 244.5,125.7" fill="url(#iCubeT)" stroke="#0c7c0c" stroke-width="0.6"/><path d="M244.5,116.1 L235.1,119.7 M244.5,116.1 L253.7,119.7 M235.1,119.7 L244.5,123.6 M253.7,119.7 L244.5,123.6 M235.1,119.7 L235.1,129.9 M253.7,119.7 L253.7,129.9 M244.5,123.6 L244.5,134.6 M235.1,129.9 L244.5,134.6 M253.7,129.9 L244.5,134.6 M244.5,116.1 L244.5,125.7 M244.5,125.7 L235.1,129.9 M244.5,125.7 L253.7,129.9" stroke="#080808" stroke-width="1.1" fill="none" stroke-linecap="round"/>
<path d="M272.5,116.1 L263.1,119.7 M272.5,116.1 L281.7,119.7 M263.1,119.7 L272.5,123.6 M281.7,119.7 L272.5,123.6 M263.1,119.7 L263.1,129.9 M281.7,119.7 L281.7,129.9 M272.5,123.6 L272.5,134.6 M263.1,129.9 L272.5,134.6 M281.7,129.9 L272.5,134.6 M272.5,116.1 L272.5,125.7 M272.5,125.7 L263.1,129.9 M272.5,125.7 L281.7,129.9" stroke="#080808" stroke-width="1.1" fill="none" stroke-linecap="round"/><polygon points="272.5,123.6 281.7,119.7 281.7,129.9 272.5,134.6" fill="url(#iCubeT)" stroke="#0c7c0c" stroke-width="0.6"/>
<path d="M300.5,116.1 L291.1,119.7 M300.5,116.1 L309.7,119.7 M291.1,119.7 L300.5,123.6 M309.7,119.7 L300.5,123.6 M291.1,119.7 L291.1,129.9 M309.7,119.7 L309.7,129.9 M300.5,123.6 L300.5,134.6 M291.1,129.9 L300.5,134.6 M309.7,129.9 L300.5,134.6 M300.5,116.1 L300.5,125.7 M300.5,125.7 L291.1,129.9 M300.5,125.7 L309.7,129.9" stroke="#080808" stroke-width="1.1" fill="none" stroke-linecap="round"/><polygon points="291.1,119.7 300.5,123.6 300.5,134.6 291.1,129.9" fill="url(#iCubeT)" stroke="#0c7c0c" stroke-width="0.6"/>
<polygon points="328.5,116.1 337.7,119.7 337.7,129.9 328.5,125.7" fill="url(#iCubeT)" stroke="#0c7c0c" stroke-width="0.6"/><path d="M328.5,116.1 L319.1,119.7 M328.5,116.1 L337.7,119.7 M319.1,119.7 L328.5,123.6 M337.7,119.7 L328.5,123.6 M319.1,119.7 L319.1,129.9 M337.7,119.7 L337.7,129.9 M328.5,123.6 L328.5,134.6 M319.1,129.9 L328.5,134.6 M337.7,129.9 L328.5,134.6 M328.5,116.1 L328.5,125.7 M328.5,125.7 L319.1,129.9 M328.5,125.7 L337.7,129.9" stroke="#080808" stroke-width="1.1" fill="none" stroke-linecap="round"/>
<polygon points="356.5,116.1 365.7,119.7 356.5,123.6 347.1,119.7" fill="#50d830"/><polygon points="347.1,119.7 356.5,123.6 356.5,134.6 347.1,129.9" fill="#30c020"/><polygon points="356.5,123.6 365.7,119.7 365.7,129.9 356.5,134.6" fill="url(#iCubeR)"/><polygon points="356.5,116.1 365.7,119.7 365.7,129.9 356.5,134.6 347.1,129.9 347.1,119.7" fill="none" stroke="#109010" stroke-width="0.9"/><path d="M347.1,119.7 L356.5,123.6 L365.7,119.7 M356.5,123.6 L356.5,134.6" fill="none" stroke="#108010" stroke-width="0.9"/>
<rect x="64" y="141" width="24" height="24" fill="#7e859c"/>
<rect x="64" y="169" width="24" height="24" fill="#7e859c"/>
<rect x="64.5" y="197.5" width="23" height="23" fill="#a0985c" stroke="#f0d070" stroke-width="1"/>
<rect x="64" y="225" width="24" height="24" fill="#7e859c"/>
<rect x="64" y="253" width="24" height="24" fill="#7e859c"/>
<g transform="translate(72,145.2) scale(1)"><path d="M0,2.3 V13.7 A5.3,2.3 0 0 0 10.6,13.7 V2.3 A5.3,2.3 0 0 0 0,2.3 Z" fill="none" stroke="#202020" stroke-width="1.1"/><ellipse cx="5.3" cy="2.3" rx="5.3" ry="2.3" fill="none" stroke="#202020" stroke-width="1.1"/><path d="M0,13.7 A5.3,2.3 0 0 1 10.6,13.7" fill="none" stroke="#202020" stroke-width="0.8800000000000001" opacity="0.8"/></g>
<g transform="translate(72,173.2) scale(1)"><path d="M0,2.3 V13.7 A5.3,2.3 0 0 0 10.6,13.7 V2.3 A5.3,2.3 0 0 0 0,2.3 Z" fill="none" stroke="#202020" stroke-width="1.1"/><ellipse cx="5.3" cy="2.3" rx="5.3" ry="2.3" fill="none" stroke="#202020" stroke-width="1.1"/></g>
<g transform="translate(72,201.2) scale(1)"><path d="M0,2.3 V13.7 A5.3,2.3 0 0 0 10.6,13.7 V2.3 A5.3,2.3 0 0 0 0,2.3 Z" fill="url(#iBlue)" stroke="#182848" stroke-width="1.1"/><ellipse cx="5.3" cy="2.3" rx="5.3" ry="2.3" fill="#6c98e4" stroke="#182848" stroke-width="1.1"/></g>
<g transform="translate(72,229.2) scale(1)"><path d="M0,2.3 V13.7 A5.3,2.3 0 0 0 10.6,13.7 V2.3 A5.3,2.3 0 0 0 0,2.3 Z" fill="url(#iPale)" stroke="#485068" stroke-width="1.1"/><ellipse cx="5.3" cy="2.3" rx="5.3" ry="2.3" fill="#e4ecfc" stroke="#485068" stroke-width="1.1"/><path d="M0,13.7 A5.3,2.3 0 0 1 10.6,13.7" fill="none" stroke="#485068" stroke-width="0.8800000000000001" opacity="0.8"/></g>
<g transform="translate(72,257.2) scale(1)"><g transform="translate(0,0) scale(1)"><path d="M0,2.3 V13.7 A5.5,2.3 0 0 0 11,13.7 V2.3 A5.5,2.3 0 0 0 0,2.3 Z" fill="#8c92a8" stroke="#303030" stroke-width="1.1"/><ellipse cx="5.5" cy="2.3" rx="5.5" ry="2.3" fill="#8c92a8" stroke="#303030" stroke-width="1.1"/></g><path d="M2.5,3.6 Q4.5,8 2.6,14.6 M5,4.4 Q3.6,9 5.6,15.4 M7.4,4.2 Q9,9.5 7.2,15.2 M9.2,3.6 Q7.8,8 9.4,13.6 M3.4,6 L7.6,12" fill="none" stroke="#303030" stroke-width="0.8"/></g>
<rect x="1181" y="1022" width="18" height="17" fill="#c4c8d8" stroke="#787c8c" stroke-width="1"/><rect x="1183.6" y="1024.2" width="12.8" height="12.6" rx="2" fill="#f0d8dc" stroke="#e05060" stroke-width="1.2"/><path d="M1186.4,1030 A3.6,3.4 0 0 1 1193,1028.4 L1193.6,1026.8 L1194.6,1030.8 L1190.8,1030 L1192.2,1029.2 A2.4,2.2 0 0 0 1187.8,1030 Z M1193.6,1031.4 A3.6,3.4 0 0 1 1187,1033 L1186.4,1034.6 L1185.4,1030.8 L1189.2,1031.6 L1187.8,1032.2 A2.4,2.2 0 0 0 1192.2,1031.4 Z" fill="#e04858"/>
<rect x="1212" y="1022" width="18" height="17" fill="#ffe58c"/><path d="M1215,1024 L1218.6,1027 L1221,1023.6 L1222.4,1027.6 L1226.4,1027 L1223.6,1030 L1225,1033 L1221,1031.6 L1217,1034 L1217.6,1030 L1214,1028.6 Z" fill="#c060d0" stroke="#8838a0" stroke-width="0.5"/><path d="M1220,1028.6 L1227.6,1036 L1224.6,1036.4 L1226,1039 L1224.4,1039.4 L1223,1037 L1220.6,1038.6 Z" fill="#f4f4f4" stroke="#606060" stroke-width="0.7"/>
<path d="M1245,1030.6 L1251,1025.6 L1259.6,1027 L1254,1032.4 Z" fill="#e8b060" stroke="#a06c20" stroke-width="0.6"/><path d="M1246.4,1031 V1038 H1255 V1031.6" fill="#c8d8f4" stroke="#4868b0" stroke-width="0.8"/><path d="M1248,1033 H1250 V1035 H1248 Z M1251.6,1033 H1253.6 V1035 H1251.6 Z M1248,1036 H1250 V1037.6 H1248 Z" fill="#2858d0"/><path d="M1253,1026 L1258,1024.4 L1259.6,1027 L1255,1029 Z" fill="#f4d8a0" stroke="#a06c20" stroke-width="0.5"/>
<ellipse cx="1284" cy="1038" rx="5" ry="1.3" fill="#606878" opacity="0.6"/><text x="1277.6" y="1037" font-family="'Liberation Sans',sans-serif" font-size="18" font-weight="bold" fill="#3868d0" stroke="#1c3c98" stroke-width="0.4">?</text>
<g transform="translate(1308,1023.4) scale(0.8)"><path d="M0,2.6 L5,0 L10,2.2 L5,4.8 Z" fill="#88b8f8" stroke="#303030" stroke-width="0.6"/><path d="M0,2.6 L5,4.8 L5,11 L0,8.4 Z" fill="#3c70d8" stroke="#303030" stroke-width="0.6"/><path d="M5,4.8 L10,2.2 L10,8.2 L5,11 Z" fill="#5890e8" stroke="#303030" stroke-width="0.6"/></g><g transform="translate(1315,1028.6) scale(0.9)"><path d="M0,2.6 L5,0 L10,2.2 L5,4.8 Z" fill="#a8d0d8" stroke="#303030" stroke-width="0.6"/><path d="M0,2.6 L5,4.8 L5,11 L0,8.4 Z" fill="#507880" stroke="#303030" stroke-width="0.6"/><path d="M5,4.8 L10,2.2 L10,8.2 L5,11 Z" fill="#88b0b8" stroke="#303030" stroke-width="0.6"/></g><path d="M1306,1034 H1313 M1309,1030.6 L1313,1034 L1309,1037.4 M1307,1031 L1311,1037" stroke="#f01010" stroke-width="1.2" fill="none"/>
<rect x="1336" y="1022" width="18" height="17" fill="#ffe58c"/><path d="M1338,1028 L1345,1025 L1352.4,1027.6 L1345.4,1031 Z" fill="#e838e8" stroke="#2848c8" stroke-width="0.8"/><path d="M1338,1028 L1345.4,1031 V1038.6 L1338.6,1035 Z" fill="#98b0c0" stroke="#2848c8" stroke-width="0.8"/><path d="M1345.4,1031 L1352.4,1027.6 L1351.6,1035 L1345.4,1038.6 Z" fill="#70c0b0" stroke="#2848c8" stroke-width="0.8"/>
<rect x="1367.5" y="1027.5" width="9" height="11" fill="#f4f4f8" stroke="#606880" stroke-width="1"/>
<rect x="1430.500" y="1023.500" width="15" height="14" fill="#e8ecf8" stroke="#586088" stroke-width="1"/><path d="M1438,1023.500 V1037.500 M1430.500,1030.500 H1445.500" stroke="#586088" stroke-width="1"/>
<circle cx="1468.4" cy="1008.6" r="3.9" fill="#e8f4ff" stroke="#2858b8" stroke-width="1.3"/><path d="M1465.8,1011.600 L1461.400,1016.200" stroke="#2858b8" stroke-width="1.7"/>
<circle cx="1900.5" cy="1010.5" r="6.2" fill="url(#iEarth)" stroke="#081048" stroke-width="0.6"/><path d="M1896,1007.600 Q1898,1005 1901,1006 Q1903,1008 1900.600,1009.600 Q1898.600,1012 1897,1010.600 Z M1901.600,1011 Q1904.600,1010 1905.600,1012.600 Q1904,1015.600 1901.600,1015 Z" fill="#30c030"/>
<g>
<ellipse cx="1405" cy="1038.6" rx="18" ry="2.2" fill="#a87040" opacity="0.55"/>
<g font-family="'Liberation Sans',sans-serif" font-weight="bold" stroke-linejoin="round">
<text x="1433.5" y="989" font-size="24" fill="#fff" stroke="#b87838" stroke-width="3.2" paint-order="stroke" textLength="23" lengthAdjust="spacingAndGlyphs" transform="rotate(-9 1445 980)">W</text>
<circle cx="1440" cy="980" r="1.3" fill="#c89058"/><circle cx="1449.500" cy="977" r="1.3" fill="#c89058"/><circle cx="1445" cy="985" r="1.1" fill="#c89058"/>
<circle cx="1438.500" cy="992.500" r="3.2" fill="#b87838"/><circle cx="1453.500" cy="991.500" r="3.2" fill="#b87838"/><circle cx="1453.500" cy="991.500" r="1.5" fill="#e8b4a0"/><ellipse cx="1446" cy="1001" rx="9" ry="11" fill="#b87838"/><ellipse cx="1446" cy="1001.500" rx="3.3" ry="5.4" fill="#fff"/>
<text x="1434.5" y="1033" font-size="27" fill="#fff060" stroke="#c89030" stroke-width="3" paint-order="stroke" textLength="23" lengthAdjust="spacingAndGlyphs" transform="rotate(-8 1446 1024)">W</text>
</g>
<path d="M1392,1019 Q1385,1021 1386.500,1027 Q1389,1029 1392,1026 Z" fill="#fff04a" stroke="#e0b020" stroke-width="0.7"/>
<path d="M1419,1019 Q1428,1023 1427.500,1016.500 Q1425,1013 1420,1015 Z" fill="#fff04a" stroke="#e0b020" stroke-width="0.7"/>
<path d="M1394,1014 Q1390,1030 1397,1036 Q1398,1039 1402,1038.500 L1405,1035 L1407,1038.500 Q1413,1039.500 1414,1036 Q1421,1030 1418,1014 Z" fill="#fff04a" stroke="#e0b020" stroke-width="0.7"/>
<path d="M1404,974 Q1402,968 1399.500,966" fill="none" stroke="#a06428" stroke-width="2.2" stroke-linecap="round"/><path d="M1408,974 Q1409,969 1411,966.500" fill="none" stroke="#a06428" stroke-width="1.800" stroke-linecap="round"/>
<circle cx="1388.500" cy="978.500" r="6.2" fill="#c08848" stroke="#a06c34" stroke-width="0.6"/><circle cx="1423.500" cy="977.500" r="6.2" fill="#c08848" stroke="#a06c34" stroke-width="0.6"/><circle cx="1389" cy="979" r="3" fill="#e8b4a0"/><circle cx="1423" cy="978" r="3" fill="#e8b4a0"/>
<ellipse cx="1406.5" cy="996.500" rx="26" ry="24" fill="#c08848" stroke="#a06c34" stroke-width="0.6"/>
<ellipse cx="1406.5" cy="997" rx="20.4" ry="17.6" fill="#fff14c"/>
<ellipse cx="1392.500" cy="999.500" rx="3.8" ry="3" fill="#ffb038" opacity="0.9"/><ellipse cx="1421" cy="999.500" rx="3.8" ry="3" fill="#ffb038" opacity="0.9"/>
<circle cx="1396.200" cy="993.400" r="1.5" fill="#603818"/><circle cx="1415.800" cy="993.400" r="1.5" fill="#603818"/><path d="M1405,997.200 Q1406.500,998.400 1408,997.200" fill="none" stroke="#603818" stroke-width="0.9"/>
<path d="M1418,1016 L1404,1031" stroke="#b07838" stroke-width="2"/>
<circle cx="1390.500" cy="1022.500" r="2.600" fill="#b87c40"/><circle cx="1401.500" cy="1022" r="2.600" fill="#b87c40"/><ellipse cx="1396" cy="1027.500" rx="7.4" ry="6.4" fill="#c08848"/><ellipse cx="1396" cy="1035" rx="5" ry="3.600" fill="#b87c40"/><circle cx="1393.200" cy="1026.500" r="0.900" fill="#402008"/><circle cx="1398.800" cy="1026.500" r="0.9" fill="#402008"/><ellipse cx="1391.500" cy="1029.500" rx="1.500" ry="1" fill="#ff98c8"/><ellipse cx="1400.500" cy="1029.500" rx="1.500" ry="1" fill="#ff98c8"/>
<circle cx="1367.3" cy="1005.500" r="8.3" fill="#a46a50" stroke="#fff" stroke-width="0.7"/><text x="1362.4" y="1010.6" font-family="'Liberation Sans',sans-serif" font-size="13.500" fill="#fff">A</text>
<circle cx="1374.600" cy="1026.700" r="8.3" fill="#a46a50" stroke="#fff" stroke-width="0.7"/><path d="M1369.600,1023.700 L1372.600,1022.200 Q1374.600,1023.800 1376.600,1022.200 L1379.600,1023.700 L1378.600,1026.200 L1377.600,1025.800 V1031.200 H1371.600 V1025.800 L1370.600,1026.200 Z" fill="#fff"/>
</g>
</svg>
</body></html>
